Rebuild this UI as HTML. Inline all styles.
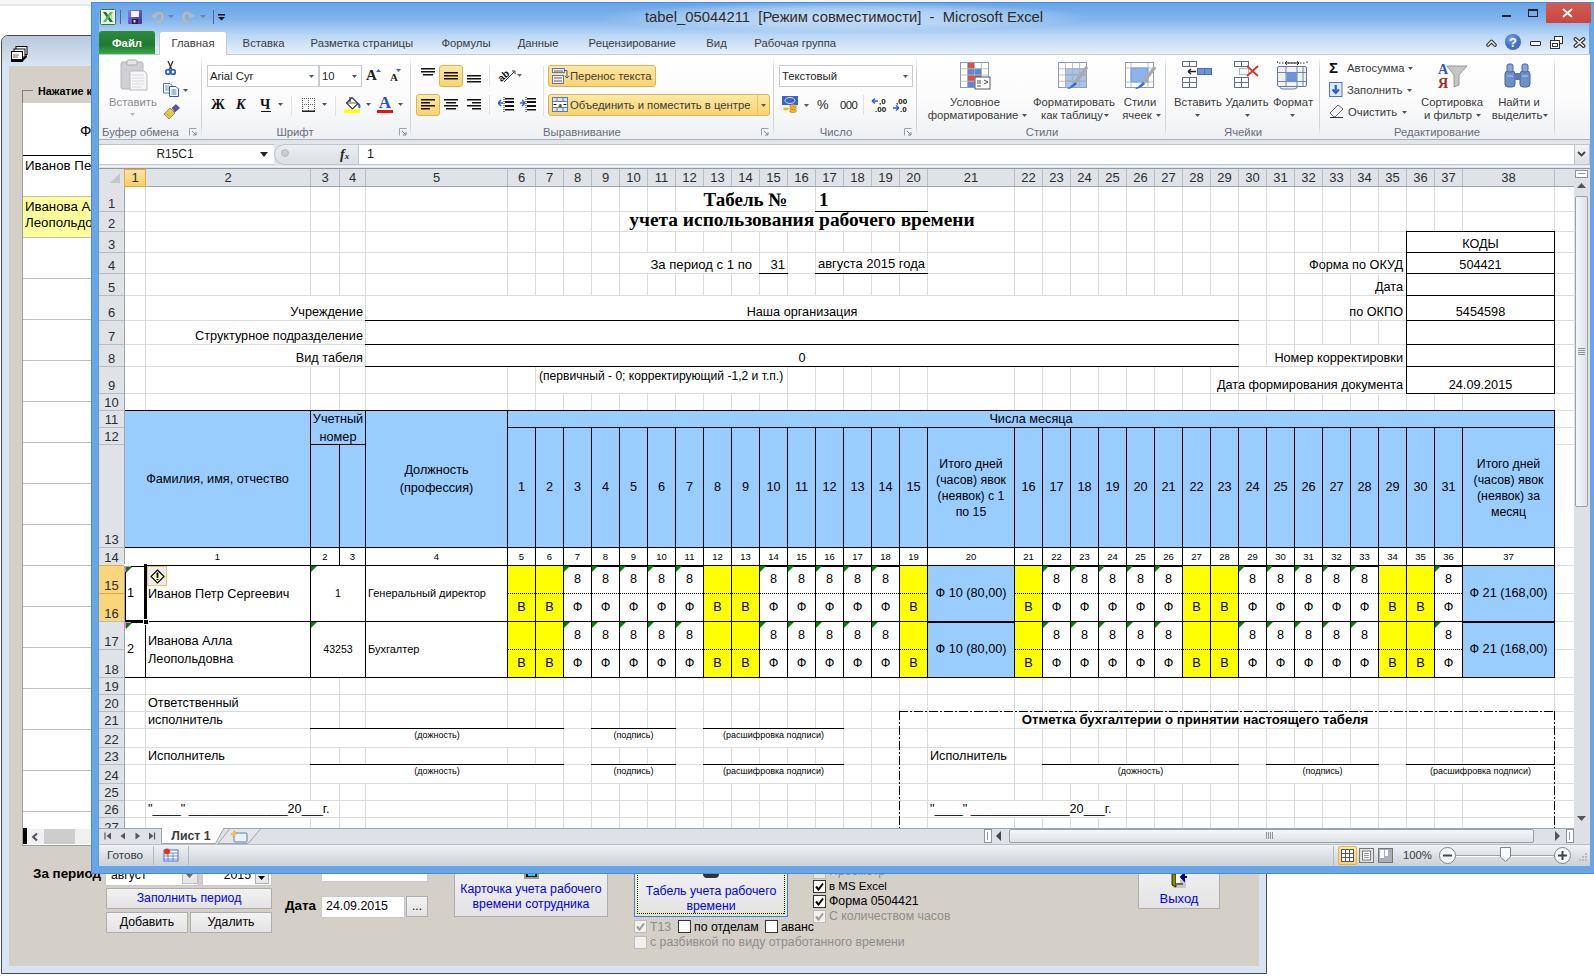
<!DOCTYPE html>
<html><head><meta charset="utf-8"><title>tabel_05044211 - Microsoft Excel</title>
<style>
html,body{margin:0;padding:0;}
body{width:1594px;height:977px;position:relative;overflow:hidden;font-family:"Liberation Sans", sans-serif;background:#fff;}
body>div,body>svg{position:absolute;}
.t{white-space:nowrap;overflow:visible;}
.c{display:flex;flex-direction:column;box-sizing:border-box;white-space:nowrap;color:#000;overflow:visible;}
</style></head><body>
<div style="left:0px;top:0px;width:1594px;height:977px;background:#fff"></div>
<div style="left:0px;top:0px;width:1594px;height:4px;background:#f4f5f7"></div>
<div style="left:0px;top:4px;width:1594px;height:2px;background:#e8e9eb"></div>
<div style="left:1px;top:35px;width:1266px;height:939px;background:#d6e4f3;border:1px solid #4a4a4a;border-radius:7px 7px 0 0;box-sizing:border-box"></div>
<div style="left:2px;top:36px;width:1264px;height:30px;background:linear-gradient(#b9c9db,#d8e5f3);border-radius:6px 6px 0 0"></div>
<div style="left:9px;top:66px;width:1250px;height:900px;background:#d4d0c8"></div>
<svg style="left:11px;top:46px;" width="17" height="16" viewBox="0 0 17 16"><rect x="5" y="0.5" width="11" height="8" fill="#fff" stroke="#000"/><rect x="3" y="3" width="11" height="8" fill="#fff" stroke="#000"/><rect x="0.5" y="5.5" width="11" height="8" fill="#fff" stroke="#000"/><rect x="0" y="13" width="12" height="3" fill="#000"/><path d="M12 12 L16 9 L16 11 L12 15Z" fill="#000"/><path d="M2 9h6M2 11h5" stroke="#666"/></svg>
<div style="left:22px;top:90px;width:11px;height:1px;background:#808080"></div>
<div style="left:22px;top:90px;width:1px;height:13px;background:#808080"></div>
<div class="t" style="left:38px;top:83px;width:60px;height:17px;line-height:17px;text-align:left;font-weight:bold;font-size:10.8px;color:#000">Нажатие к</div>
<div style="left:22px;top:103px;width:70px;height:743px;background:#fff;border-left:1px solid #a0a0a0;border-bottom:1px solid #a0a0a0;box-sizing:border-box"></div>
<div class="t" style="left:80px;top:121px;width:20px;height:20px;line-height:20px;text-align:left;font-size:15px;color:#000">Ф</div>
<div style="left:23px;top:155px;width:69px;height:1px;background:#000"></div>
<div class="t" style="left:25px;top:157px;width:80px;height:18px;line-height:18px;text-align:left;font-size:13.3px;color:#000">Иванов Петр</div>
<div style="left:23px;top:196px;width:69px;height:1px;background:#bdbdbd"></div>
<div style="left:23px;top:197px;width:69px;height:40px;background:#ffff99"></div>
<div class="t" style="left:25px;top:198px;width:80px;height:17px;line-height:17px;text-align:left;font-size:13.3px;color:#000">Иванова Алла</div>
<div class="t" style="left:25px;top:214px;width:80px;height:17px;line-height:17px;text-align:left;font-size:13.3px;color:#000">Леопольдовна</div>
<div style="left:23px;top:237px;width:69px;height:1px;background:#bdbdbd"></div>
<div style="left:23px;top:278px;width:69px;height:1px;background:#bdbdbd"></div>
<div style="left:23px;top:319px;width:69px;height:1px;background:#bdbdbd"></div>
<div style="left:23px;top:360px;width:69px;height:1px;background:#bdbdbd"></div>
<div style="left:23px;top:401px;width:69px;height:1px;background:#bdbdbd"></div>
<div style="left:23px;top:442px;width:69px;height:1px;background:#bdbdbd"></div>
<div style="left:23px;top:483px;width:69px;height:1px;background:#bdbdbd"></div>
<div style="left:23px;top:524px;width:69px;height:1px;background:#bdbdbd"></div>
<div style="left:23px;top:565px;width:69px;height:1px;background:#bdbdbd"></div>
<div style="left:23px;top:606px;width:69px;height:1px;background:#bdbdbd"></div>
<div style="left:23px;top:647px;width:69px;height:1px;background:#bdbdbd"></div>
<div style="left:23px;top:688px;width:69px;height:1px;background:#bdbdbd"></div>
<div style="left:23px;top:729px;width:69px;height:1px;background:#bdbdbd"></div>
<div style="left:23px;top:770px;width:69px;height:1px;background:#bdbdbd"></div>
<div style="left:23px;top:811px;width:69px;height:1px;background:#bdbdbd"></div>
<div style="left:27px;top:829px;width:65px;height:15px;background:#f0f0f0"></div>
<div style="left:23px;top:828px;width:4px;height:16px;background:#000"></div>
<svg style="left:30px;top:831px;" width="10" height="12" viewBox="0 0 10 12"><path d="M7 2.5 L3.2 6 L7 9.5" stroke="#555" stroke-width="2.2" fill="none"/></svg>
<div style="left:44px;top:829px;width:31px;height:15px;background:#cdcdcd"></div>
<div class="t" style="left:33px;top:864px;width:80px;height:19px;line-height:19px;text-align:left;font-weight:bold;font-size:13.4px;color:#000">За период</div>
<div style="left:105px;top:862px;width:94px;height:24px;background:#fff;border:1px solid #c9c9c9;box-sizing:border-box"></div>
<div class="t" style="left:111px;top:866px;width:60px;height:19px;line-height:19px;text-align:left;font-size:12.3px;color:#000">август</div>
<div style="left:182px;top:864px;width:16px;height:20px;background:#e8e8e8;border:1px solid #c0c0c0;box-sizing:border-box"></div>
<svg style="left:186px;top:874px;" width="8" height="5" viewBox="0 0 8 5"><path d="M0 0h7l-3.5 4z" fill="#666"/></svg>
<div style="left:202px;top:862px;width:70px;height:24px;background:#fff;border:1px solid #c9c9c9;box-sizing:border-box"></div>
<div class="t" style="left:206px;top:866px;width:45px;height:19px;line-height:19px;text-align:right;font-size:12.3px;color:#000">2015</div>
<div style="left:255px;top:869px;width:14px;height:15px;background:#e8e8e8;border:1px solid #b0b0b0;box-sizing:border-box"></div>
<svg style="left:258px;top:876px;" width="8" height="5" viewBox="0 0 8 5"><path d="M0 0h7l-3.5 4z" fill="#000"/></svg>
<div style="left:106px;top:888px;width:166px;height:21px;background:linear-gradient(#f2f2f2,#e3e3e3);border:1px solid #adadad;box-sizing:border-box"></div>
<div class="t" style="left:106px;top:888px;width:166px;height:20px;line-height:20px;text-align:center;font-size:12.3px;color:#0000ee">Заполнить период</div>
<div style="left:106px;top:912px;width:82px;height:21px;background:linear-gradient(#f2f2f2,#e3e3e3);border:1px solid #adadad;box-sizing:border-box"></div>
<div class="t" style="left:106px;top:912px;width:82px;height:20px;line-height:20px;text-align:center;font-size:12.3px;color:#000">Добавить</div>
<div style="left:190px;top:912px;width:82px;height:21px;background:linear-gradient(#f2f2f2,#e3e3e3);border:1px solid #adadad;box-sizing:border-box"></div>
<div class="t" style="left:190px;top:912px;width:82px;height:20px;line-height:20px;text-align:center;font-size:12.3px;color:#000">Удалить</div>
<div class="t" style="left:285px;top:896px;width:40px;height:20px;line-height:20px;text-align:left;font-weight:bold;font-size:13.4px;color:#000">Дата</div>
<div style="left:321px;top:862px;width:107px;height:20px;background:#fff;border:1px solid #c9c9c9;box-sizing:border-box"></div>
<div style="left:321px;top:896px;width:84px;height:22px;background:#fff;border:1px solid #c9c9c9;box-sizing:border-box"></div>
<div class="t" style="left:326px;top:896px;width:78px;height:21px;line-height:21px;text-align:left;font-size:12.4px;color:#000">24.09.2015</div>
<div style="left:406px;top:896px;width:22px;height:21px;background:linear-gradient(#f2f2f2,#e3e3e3);border:1px solid #adadad;box-sizing:border-box"></div>
<div class="t" style="left:406px;top:896px;width:22px;height:21px;line-height:21px;text-align:center;font-size:12px;color:#000">...</div>
<div style="left:454px;top:862px;width:154px;height:55px;background:linear-gradient(#f2f2f2,#e3e3e3);border:1px solid #adadad;box-sizing:border-box"></div>
<div style="left:524px;top:873px;width:15px;height:6px;background:#9a9a9a"></div>
<div style="left:526px;top:873px;width:11px;height:4px;background:#000"></div>
<div style="left:528px;top:874px;width:7px;height:2px;background:#00e0e0"></div>
<div class="t" style="left:454px;top:881px;width:154px;height:16px;line-height:16px;text-align:center;font-size:12.3px;color:#0000ee">Карточка учета рабочего</div>
<div class="t" style="left:454px;top:896px;width:154px;height:16px;line-height:16px;text-align:center;font-size:12.3px;color:#0000ee">времени сотрудника</div>
<div style="left:634px;top:862px;width:154px;height:55px;background:linear-gradient(#f2f2f2,#e3e3e3);border:1px solid #3c7fd6;box-sizing:border-box"></div>
<div style="left:637px;top:865px;width:148px;height:49px;border:1px dotted #000;box-sizing:border-box;outline:0;background:transparent"></div>
<div style="left:637px;top:913px;width:148px;height:1px;background:repeating-linear-gradient(90deg,#000 0 1px,#ff0 1px 2px)"></div>
<div style="left:637px;top:865px;width:1px;height:49px;background:repeating-linear-gradient(180deg,#000 0 1px,#ff0 1px 2px)"></div>
<div style="left:784px;top:865px;width:1px;height:49px;background:repeating-linear-gradient(180deg,#000 0 1px,#ff0 1px 2px)"></div>
<div style="left:703px;top:873px;width:16px;height:5px;background:#333;border-radius:0 0 4px 4px"></div>
<div class="t" style="left:634px;top:883px;width:154px;height:16px;line-height:16px;text-align:center;font-size:12.3px;color:#0000ee">Табель учета рабочего</div>
<div class="t" style="left:634px;top:898px;width:154px;height:16px;line-height:16px;text-align:center;font-size:12.3px;color:#0000ee">времени</div>
<div style="left:813px;top:873px;width:13px;height:6px;background:#e6e6e6;border:1px solid #bbb;border-top:0;box-sizing:border-box"></div>
<div class="t" style="left:829px;top:862px;width:120px;height:18px;line-height:18px;text-align:left;font-size:12.3px;color:#8d8d8d">Просмотр</div>
<div style="left:813px;top:880px;width:13px;height:13px;background:#fff;border:1px solid #333;box-sizing:border-box"></div>
<svg style="left:815px;top:882px;" width="9" height="9" viewBox="0 0 9 9"><path d="M1 4.5 L3.5 7.5 L8 1.5" stroke="#000" stroke-width="2" fill="none"/></svg>
<div class="t" style="left:829px;top:877px;width:120px;height:18px;line-height:18px;text-align:left;font-size:11.5px;color:#000">в MS Excel</div>
<div style="left:813px;top:895px;width:13px;height:13px;background:#fff;border:1px solid #333;box-sizing:border-box"></div>
<svg style="left:815px;top:897px;" width="9" height="9" viewBox="0 0 9 9"><path d="M1 4.5 L3.5 7.5 L8 1.5" stroke="#000" stroke-width="2" fill="none"/></svg>
<div class="t" style="left:829px;top:892px;width:120px;height:18px;line-height:18px;text-align:left;font-size:12.3px;color:#000">Форма 0504421</div>
<div style="left:813px;top:910px;width:13px;height:13px;background:#f1f0ee;border:1px solid #bcbcbc;box-sizing:border-box"></div>
<svg style="left:815px;top:912px;" width="9" height="9" viewBox="0 0 9 9"><path d="M1 4.5 L3.5 7.5 L8 1.5" stroke="#9a9a9a" stroke-width="2" fill="none"/></svg>
<div class="t" style="left:829px;top:907px;width:150px;height:18px;line-height:18px;text-align:left;font-size:12.3px;color:#8d8d8d">С количеством часов</div>
<div style="left:634px;top:920px;width:13px;height:13px;background:#f1f0ee;border:1px solid #bcbcbc;box-sizing:border-box"></div>
<svg style="left:636px;top:922px;" width="9" height="9" viewBox="0 0 9 9"><path d="M1 4.5 L3.5 7.5 L8 1.5" stroke="#9a9a9a" stroke-width="2" fill="none"/></svg>
<div class="t" style="left:650px;top:918px;width:40px;height:18px;line-height:18px;text-align:left;font-size:12.3px;color:#8d8d8d">Т13</div>
<div style="left:678px;top:920px;width:13px;height:13px;background:#fff;border:1px solid #333;box-sizing:border-box"></div>
<div class="t" style="left:694px;top:918px;width:80px;height:18px;line-height:18px;text-align:left;font-size:12.3px;color:#000">по отделам</div>
<div style="left:765px;top:920px;width:13px;height:13px;background:#fff;border:1px solid #333;box-sizing:border-box"></div>
<div class="t" style="left:781px;top:918px;width:50px;height:18px;line-height:18px;text-align:left;font-size:12.3px;color:#000">аванс</div>
<div style="left:634px;top:936px;width:13px;height:13px;background:#f1f0ee;border:1px solid #bcbcbc;box-sizing:border-box"></div>
<div class="t" style="left:650px;top:933px;width:270px;height:18px;line-height:18px;text-align:left;font-size:12.3px;color:#8d8d8d">с разбивкой по виду отработанного времени</div>
<div style="left:1138px;top:862px;width:82px;height:47px;background:linear-gradient(#f2f2f2,#e3e3e3);border:1px solid #adadad;box-sizing:border-box"></div>
<svg style="left:1171px;top:872px;" width="17" height="16" viewBox="0 0 17 16"><rect x="2" y="8" width="13" height="8" fill="#c8c8c8"/><path d="M1 1 L5 3 L5 15 L1 13Z" fill="#8c8c00" stroke="#000" stroke-width="0.8"/><rect x="5" y="1" width="4" height="10" fill="#fff"/><path d="M6 12h6" stroke="#000"/><path d="M16 5h-4M10 5l3-3v6z" stroke="#00008b" stroke-width="2" fill="#00008b"/></svg>
<div class="t" style="left:1138px;top:890px;width:82px;height:18px;line-height:18px;text-align:center;font-size:13px;color:#0000ee">Выход</div>
<div style="left:91px;top:2px;width:1503px;height:872px;background:#68a6e8"></div>
<div style="left:91px;top:2px;width:1px;height:872px;background:#4b8bd3"></div>
<div style="left:91px;top:873px;width:1503px;height:1px;background:#4b8bd3"></div>
<div style="left:98px;top:54px;width:1px;height:812px;background:#5b97d9"></div>
<div style="left:98px;top:865px;width:1492px;height:1px;background:#5b97d9"></div>
<div style="left:99px;top:3px;width:1490px;height:51px;background:linear-gradient(180deg,#68a4e8 0%,#7fb3ec 30%,#bcd8f5 65%,#e6f0fa 100%)"></div>
<div style="left:91px;top:2px;width:1503px;height:1px;background:#4b8bd3"></div>
<div style="left:600px;top:2px;width:490px;height:30px;background:radial-gradient(closest-side,rgba(225,238,251,0.75) 0%,rgba(225,238,251,0.45) 60%,rgba(225,238,251,0) 100%)"></div>
<div class="t" style="left:645px;top:7px;width:570px;height:20px;line-height:20px;text-align:left;font-size:14.8px;color:#2b2b2b;white-space:pre">tabel_05044211&nbsp; [Режим совместимости]&nbsp; -&nbsp; Microsoft Excel</div>
<div style="left:1546px;top:3px;width:45px;height:20px;background:linear-gradient(#d35a52,#c9463f)"></div>
<svg style="left:1562px;top:8px;" width="11" height="10" viewBox="0 0 11 10"><path d="M1 1L10 9M10 1L1 9" stroke="#fff" stroke-width="1.8"/></svg>
<div style="left:1502px;top:15px;width:9px;height:2px;background:#222"></div>
<div style="left:1528px;top:9px;width:10px;height:8px;border:1px solid #222;border-top-width:2px;box-sizing:border-box"></div>
<svg style="left:1486px;top:38px;" width="11" height="9" viewBox="0 0 11 9"><path d="M2 7 L5.5 3.5 L9 7" stroke="#333" stroke-width="3.6" fill="none" stroke-linejoin="round" stroke-linecap="round"/><path d="M2 7 L5.5 3.5 L9 7" stroke="#fff" stroke-width="1.4" fill="none" stroke-linecap="round"/></svg>
<svg style="left:1504px;top:33px;" width="18" height="18" viewBox="0 0 18 18"><circle cx="9" cy="9" r="8" fill="#4779cf"/><circle cx="9" cy="9" r="7.5" fill="url(#hg)"/><defs><radialGradient id="hg" cx="0.4" cy="0.3"><stop offset="0" stop-color="#7aa7ec"/><stop offset="1" stop-color="#3f6fc6"/></radialGradient></defs><text x="9" y="13.5" font-family="Liberation Sans" font-weight="bold" font-size="13" fill="#fff" text-anchor="middle">?</text></svg>
<div style="left:1530px;top:41px;width:11px;height:5px;background:#fff;border:1px solid #333;border-radius:1px;box-sizing:border-box"></div>
<svg style="left:1550px;top:36px;" width="14" height="13" viewBox="0 0 14 13"><rect x="4.5" y="0.5" width="8" height="7" fill="#fff" stroke="#333"/><rect x="0.5" y="4.5" width="9" height="8" fill="#fff" stroke="#333"/><rect x="2.5" y="7.5" width="5" height="3" fill="none" stroke="#333"/></svg>
<svg style="left:1573px;top:37px;" width="13" height="11" viewBox="0 0 13 11"><path d="M2.5 2L10.5 9M10.5 2L2.5 9" stroke="#333" stroke-width="3.8" stroke-linecap="round"/><path d="M2.5 2L10.5 9M10.5 2L2.5 9" stroke="#fff" stroke-width="1.6" stroke-linecap="round"/></svg>
<svg style="left:100px;top:9px;" width="16" height="16" viewBox="0 0 16 16"><rect x="0.5" y="0.5" width="15" height="15" rx="1" fill="#fff" stroke="#2e7d32"/><rect x="1.5" y="1.5" width="13" height="13" fill="#e8f3e8"/><path d="M3 3 H6 L13 13 H10Z" fill="#1e6b2a"/><path d="M13 3 H10 L3 13 H6Z" fill="#5cb85c"/><path d="M11.5 5v6" stroke="#8fd18f" stroke-width="0.8"/></svg>
<div style="left:120px;top:10px;width:1px;height:14px;background:#4d6a8a"></div>
<svg style="left:128px;top:10px;" width="14" height="14" viewBox="0 0 14 14"><defs><linearGradient id="sv" x1="0" y1="0" x2="1" y2="1"><stop offset="0" stop-color="#8a7fe0"/><stop offset="1" stop-color="#3b2f9a"/></linearGradient></defs><rect x="0" y="0" width="14" height="14" rx="1" fill="url(#sv)"/><rect x="3" y="1" width="8" height="6" fill="#f4f4ff"/><rect x="4" y="9" width="6" height="5" fill="#25224a"/><rect x="5.5" y="10" width="2" height="2.5" fill="#ddd"/></svg>
<svg style="left:150px;top:10px;" width="15" height="14" viewBox="0 0 15 14"><path d="M5 5.5 Q8 1.5 11 3.5 Q14 6 11.5 10 Q10 12 8 13" stroke="#b9b6b4" stroke-width="2.6" fill="none" stroke-linecap="round"/><path d="M0.5 6 L6.5 2.5 L6.5 9Z" fill="#b9b6b4"/></svg>
<svg style="left:168px;top:15px;" width="7" height="4" viewBox="0 0 7 4"><path d="M0 0h6l-3 3z" fill="#6a86a6"/></svg>
<svg style="left:181px;top:10px;" width="15" height="14" viewBox="0 0 15 14"><path d="M10 5.5 Q7 1.5 4 3.5 Q1 6 3.5 10 Q5 12 7 13" stroke="#b9b6b4" stroke-width="2.6" fill="none" stroke-linecap="round"/><path d="M14.5 6 L8.5 2.5 L8.5 9Z" fill="#b9b6b4"/></svg>
<svg style="left:200px;top:15px;" width="7" height="4" viewBox="0 0 7 4"><path d="M0 0h6l-3 3z" fill="#6a86a6"/></svg>
<div style="left:213px;top:10px;width:1px;height:14px;background:#4d6a8a"></div>
<svg style="left:218px;top:14px;" width="8" height="7" viewBox="0 0 8 7"><rect x="0" y="0" width="7" height="1.5" fill="#111"/><path d="M0 3h7l-3.5 3.5z" fill="#111"/></svg>
<div style="left:99px;top:31px;width:56px;height:23px;background:linear-gradient(#2e8a3e,#1f7a30 60%,#3aa64a);border-radius:3px 3px 0 0"></div>
<div class="t" style="left:99px;top:32px;width:56px;height:22px;line-height:22px;text-align:center;font-size:11.3px;color:#fff;font-weight:bold">Файл</div>
<div style="left:159px;top:31px;width:68px;height:24px;background:#fff;border:1px solid #c3c8cf;border-bottom:0;border-radius:3px 3px 0 0;box-sizing:border-box"></div>
<div class="t" style="left:159px;top:32px;width:68px;height:22px;line-height:22px;text-align:center;font-size:11.3px;color:#3b3b3b">Главная</div>
<div class="t" style="left:242.6px;top:32px;width:130px;height:22px;line-height:22px;text-align:left;font-size:11.3px;color:#3b3b3b">Вставка</div>
<div class="t" style="left:310.6px;top:32px;width:130px;height:22px;line-height:22px;text-align:left;font-size:11.3px;color:#3b3b3b">Разметка страницы</div>
<div class="t" style="left:441.4px;top:32px;width:130px;height:22px;line-height:22px;text-align:left;font-size:11.3px;color:#3b3b3b">Формулы</div>
<div class="t" style="left:517.7px;top:32px;width:130px;height:22px;line-height:22px;text-align:left;font-size:11.3px;color:#3b3b3b">Данные</div>
<div class="t" style="left:588.6px;top:32px;width:130px;height:22px;line-height:22px;text-align:left;font-size:11.3px;color:#3b3b3b">Рецензирование</div>
<div class="t" style="left:706.3px;top:32px;width:130px;height:22px;line-height:22px;text-align:left;font-size:11.3px;color:#3b3b3b">Вид</div>
<div class="t" style="left:754.3px;top:32px;width:130px;height:22px;line-height:22px;text-align:left;font-size:11.3px;color:#3b3b3b">Рабочая группа</div>
<div style="left:99px;top:54px;width:1491px;height:86px;background:linear-gradient(#ffffff 0%,#fbfbfc 55%,#eef0f3 100%);border-top:1px solid #c5cad1;border-bottom:1px solid #a9b0b8;box-sizing:border-box"></div>
<div style="left:160px;top:54px;width:66px;height:1px;background:#fff"></div>
<div style="left:201px;top:57px;width:1px;height:81px;background:linear-gradient(rgba(200,205,212,0),#cfd3d9 15%,#cfd3d9 85%,rgba(200,205,212,0))"></div>
<div style="left:410px;top:57px;width:1px;height:81px;background:linear-gradient(rgba(200,205,212,0),#cfd3d9 15%,#cfd3d9 85%,rgba(200,205,212,0))"></div>
<div style="left:773px;top:57px;width:1px;height:81px;background:linear-gradient(rgba(200,205,212,0),#cfd3d9 15%,#cfd3d9 85%,rgba(200,205,212,0))"></div>
<div style="left:916px;top:57px;width:1px;height:81px;background:linear-gradient(rgba(200,205,212,0),#cfd3d9 15%,#cfd3d9 85%,rgba(200,205,212,0))"></div>
<div style="left:1165px;top:57px;width:1px;height:81px;background:linear-gradient(rgba(200,205,212,0),#cfd3d9 15%,#cfd3d9 85%,rgba(200,205,212,0))"></div>
<div style="left:1319px;top:57px;width:1px;height:81px;background:linear-gradient(rgba(200,205,212,0),#cfd3d9 15%,#cfd3d9 85%,rgba(200,205,212,0))"></div>
<div style="left:1554px;top:57px;width:1px;height:81px;background:linear-gradient(rgba(200,205,212,0),#cfd3d9 15%,#cfd3d9 85%,rgba(200,205,212,0))"></div>
<svg style="left:120px;top:59px;" width="28" height="32" viewBox="0 0 28 32"><rect x="1" y="3" width="22" height="27" rx="2" fill="#cfcfd4" stroke="#b5b5bb"/><rect x="7" y="1" width="10" height="5" rx="1.5" fill="#e8e8ea" stroke="#a9a9ae"/><path d="M10 12 H24 L27 15 V31 H10Z" fill="#f6f6f7" stroke="#b9b9be"/><path d="M12 16h12M12 19h12M12 22h12M12 25h12M12 28h10" stroke="#dadadd"/></svg>
<div class="t" style="left:105px;top:95px;width:56px;height:15px;line-height:15px;text-align:center;font-size:11.3px;color:#8c8c95">Вставить</div>
<svg style="left:130px;top:113px;" width="6" height="3" viewBox="0 0 6 3"><path d="M0 0h5l-2.5 3z" fill="#b5b5bb"/></svg>
<div class="t" style="left:102px;top:125px;width:90px;height:15px;line-height:15px;text-align:left;font-size:11.3px;color:#6b6b7b">Буфер обмена</div>
<svg style="left:189px;top:128px;" width="8" height="8" viewBox="0 0 8 8"><path d="M0.5 7.5V0.5H7.5" stroke="#9aa3ad" fill="none"/><path d="M3 3L7 7M7 4V7H4" stroke="#7f8a96" fill="none"/></svg>
<svg style="left:165px;top:61px;" width="11" height="14" viewBox="0 0 11 14"><path d="M3 0 L6.5 8 M8 0 L4.5 8" stroke="#333" stroke-width="1.3"/><circle cx="3" cy="11" r="2.3" fill="none" stroke="#2a5bd7" stroke-width="1.8"/><circle cx="8" cy="11" r="2.3" fill="none" stroke="#2a5bd7" stroke-width="1.8"/></svg>
<svg style="left:163px;top:83px;" width="16" height="14" viewBox="0 0 16 14"><path d="M0.5 0.5H7L9 2.5V10H0.5Z" fill="#fff" stroke="#4a74c9"/><path d="M2 3h4M2 5h4M2 7h4" stroke="#6b8fd6"/><path d="M6.5 3.5H13L15.5 6V13.5H6.5Z" fill="#fff" stroke="#2d59b5"/><path d="M8.5 7h5M8.5 9h5M8.5 11h5" stroke="#4a74c9"/></svg>
<svg style="left:183px;top:89px;" width="6" height="3" viewBox="0 0 6 3"><path d="M0 0h5l-2.5 3z" fill="#555"/></svg>
<svg style="left:163px;top:104px;" width="17" height="15" viewBox="0 0 17 15"><path d="M1 10 L7 4 L12 9 L6 15Z" fill="#e8c84a" stroke="#8a7a2a" stroke-width="0.8"/><path d="M2 11l3 3M3.5 9.5l3 3" stroke="#b89b2a"/><path d="M9 4 L13 0.5 L16.5 4 L12 8Z" fill="#5a4fb0" stroke="#3a3080" stroke-width="0.6"/></svg>
<div style="left:207px;top:65px;width:112px;height:22px;background:#fff;border:1px solid #c7ccd3;box-sizing:border-box"></div>
<div class="t" style="left:210px;top:66px;width:90px;height:20px;line-height:20px;text-align:left;font-size:11.3px;color:#1e1e1e">Arial Cyr</div>
<svg style="left:309px;top:75px;" width="6" height="3" viewBox="0 0 6 3"><path d="M0 0h5l-2.5 3z" fill="#555"/></svg>
<div style="left:319px;top:65px;width:43px;height:22px;background:#fff;border:1px solid #c7ccd3;box-sizing:border-box"></div>
<div class="t" style="left:322px;top:66px;width:30px;height:20px;line-height:20px;text-align:left;font-size:11.3px;color:#1e1e1e">10</div>
<svg style="left:352px;top:75px;" width="6" height="3" viewBox="0 0 6 3"><path d="M0 0h5l-2.5 3z" fill="#555"/></svg>
<div class="t" style="left:366px;top:66px;width:16px;height:18px;line-height:18px;text-align:left;font-family:Liberation Serif;font-weight:bold;font-size:15px;color:#222">A</div>
<svg style="left:376px;top:69px;" width="6" height="4" viewBox="0 0 6 4"><path d="M0 3h5l-2.5-3z" fill="#3563c9"/></svg>
<div class="t" style="left:390px;top:69px;width:12px;height:16px;line-height:16px;text-align:left;font-family:Liberation Serif;font-weight:bold;font-size:11px;color:#222">A</div>
<svg style="left:396px;top:69px;" width="6" height="4" viewBox="0 0 6 4"><path d="M0 0h5l-2.5 3z" fill="#3563c9"/></svg>
<div class="t" style="left:211px;top:96px;width:16px;height:18px;line-height:18px;text-align:left;font-family:Liberation Serif;font-weight:bold;font-size:14px;color:#111">Ж</div>
<div class="t" style="left:236px;top:96px;width:14px;height:18px;line-height:18px;text-align:left;font-family:Liberation Serif;font-weight:bold;font-style:italic;font-size:14px;color:#111">К</div>
<div class="t" style="left:260px;top:96px;width:14px;height:18px;line-height:18px;text-align:left;font-family:Liberation Serif;font-weight:bold;font-size:14px;color:#111">Ч</div>
<div style="left:261px;top:111px;width:10px;height:1px;background:#111"></div>
<svg style="left:278px;top:103px;" width="6" height="3" viewBox="0 0 6 3"><path d="M0 0h5l-2.5 3z" fill="#555"/></svg>
<div style="left:291px;top:96px;width:1px;height:20px;background:#dfe2e6"></div>
<svg style="left:302px;top:98px;" width="14" height="15" viewBox="0 0 14 15"><g stroke="#666" stroke-width="1" stroke-dasharray="1 1"><path d="M0.5 0V13M6.5 0V13M12.5 0V13M0 0.5H13M0 6.5H13"/></g><rect x="0" y="12.5" width="13" height="1.5" fill="#222"/></svg>
<svg style="left:322px;top:103px;" width="6" height="3" viewBox="0 0 6 3"><path d="M0 0h5l-2.5 3z" fill="#555"/></svg>
<div style="left:335px;top:96px;width:1px;height:20px;background:#dfe2e6"></div>
<svg style="left:344px;top:96px;" width="17" height="17" viewBox="0 0 17 17"><path d="M2.5 7 L8 1.5 L14 7.5 L8.5 13Z" fill="#fff" stroke="#333" stroke-width="1.1"/><path d="M2.5 7 H14" stroke="#333" stroke-width="0.8"/><path d="M6 1 V6" stroke="#333" stroke-width="1.2"/><path d="M14 7.5 Q16.5 10 15 12" stroke="#2d5fc4" stroke-width="2" fill="none"/><rect x="0" y="13.5" width="16" height="3.5" fill="#ffff00"/></svg>
<svg style="left:366px;top:103px;" width="6" height="3" viewBox="0 0 6 3"><path d="M0 0h5l-2.5 3z" fill="#555"/></svg>
<div class="t" style="left:377px;top:94px;width:16px;height:18px;line-height:18px;text-align:center;font-family:Liberation Serif;font-weight:bold;font-size:17px;color:#2c4fb8">A</div>
<div style="left:377px;top:110px;width:16px;height:3px;background:#ee1111"></div>
<svg style="left:398px;top:103px;" width="6" height="3" viewBox="0 0 6 3"><path d="M0 0h5l-2.5 3z" fill="#555"/></svg>
<div class="t" style="left:250px;top:125px;width:90px;height:15px;line-height:15px;text-align:center;font-size:11.3px;color:#6b6b7b">Шрифт</div>
<svg style="left:399px;top:128px;" width="8" height="8" viewBox="0 0 8 8"><path d="M0.5 7.5V0.5H7.5" stroke="#9aa3ad" fill="none"/><path d="M3 3L7 7M7 4V7H4" stroke="#7f8a96" fill="none"/></svg>
<svg style="left:421px;top:68px;" width="15" height="8" viewBox="0 0 15 8"><rect x="0" y="0" width="14" height="1.5" fill="#111"/><rect x="0" y="3" width="14" height="1.5" fill="#111"/><rect x="2" y="6" width="10" height="1.5" fill="#111"/></svg>
<div style="left:439px;top:65px;width:24px;height:22px;background:linear-gradient(#fde8a8,#f9d46e);border:1px solid #e0b34e;border-radius:3px;box-sizing:border-box"></div>
<svg style="left:444px;top:72px;" width="15" height="8" viewBox="0 0 15 8"><rect x="0" y="0" width="14" height="1.5" fill="#111"/><rect x="0" y="3" width="14" height="1.5" fill="#111"/><rect x="0" y="6" width="14" height="1.5" fill="#111"/></svg>
<svg style="left:467px;top:75px;" width="15" height="8" viewBox="0 0 15 8"><rect x="0" y="0" width="14" height="1.5" fill="#111"/><rect x="0" y="3" width="14" height="1.5" fill="#111"/><rect x="0" y="6" width="14" height="1.5" fill="#111"/></svg>
<div style="left:489px;top:66px;width:1px;height:20px;background:#dfe2e6"></div>
<svg style="left:498px;top:68px;" width="24" height="15" viewBox="0 0 24 15"><text x="0" y="11" transform="rotate(-40 6 8)" font-family="Liberation Sans" font-weight="bold" font-size="10" fill="#111">ab</text><path d="M6 14 L16 4" stroke="#333"/><path d="M14 3h3v3" stroke="#333" fill="none"/><path d="M19 6h5l-2.5 3z" fill="#666"/></svg>
<div style="left:416px;top:94px;width:24px;height:22px;background:linear-gradient(#fde8a8,#f9d46e);border:1px solid #e0b34e;border-radius:3px;box-sizing:border-box"></div>
<svg style="left:421px;top:99px;" width="15" height="12" viewBox="0 0 15 12"><rect x="0" y="0" width="14" height="1.5" fill="#111"/><rect x="0" y="3" width="9" height="1.5" fill="#111"/><rect x="0" y="6" width="14" height="1.5" fill="#111"/><rect x="0" y="9" width="9" height="1.5" fill="#111"/></svg>
<svg style="left:444px;top:99px;" width="15" height="12" viewBox="0 0 15 12"><rect x="0" y="0" width="14" height="1.5" fill="#111"/><rect x="2" y="3" width="10" height="1.5" fill="#111"/><rect x="0" y="6" width="14" height="1.5" fill="#111"/><rect x="2" y="9" width="10" height="1.5" fill="#111"/></svg>
<svg style="left:467px;top:99px;" width="15" height="12" viewBox="0 0 15 12"><rect x="0" y="0" width="14" height="1.5" fill="#111"/><rect x="5" y="3" width="9" height="1.5" fill="#111"/><rect x="0" y="6" width="14" height="1.5" fill="#111"/><rect x="5" y="9" width="9" height="1.5" fill="#111"/></svg>
<div style="left:489px;top:95px;width:1px;height:20px;background:#dfe2e6"></div>
<svg style="left:498px;top:97px;" width="17" height="15" viewBox="0 0 17 15"><rect x="7" y="1" width="9" height="1.5" fill="#111"/><rect x="7" y="4" width="9" height="2" fill="#111"/><rect x="7" y="8" width="9" height="2" fill="#111"/><rect x="7" y="12" width="9" height="1.5" fill="#111"/><path d="M6 0V15" stroke="#111" stroke-dasharray="1 1"/><path d="M0 6h5M0 6l3-3M0 6l3 3" stroke="#2d5fc4" stroke-width="1.5"/></svg>
<svg style="left:520px;top:97px;" width="17" height="15" viewBox="0 0 17 15"><rect x="7" y="1" width="9" height="1.5" fill="#111"/><rect x="7" y="4" width="9" height="2" fill="#111"/><rect x="7" y="8" width="9" height="2" fill="#111"/><rect x="7" y="12" width="9" height="1.5" fill="#111"/><path d="M6 0V15" stroke="#111" stroke-dasharray="1 1"/><path d="M0 6h5M5 6l-3-3M5 6l-3 3" stroke="#2d5fc4" stroke-width="1.5"/></svg>
<div style="left:543px;top:66px;width:1px;height:50px;background:#dfe2e6"></div>
<div style="left:548px;top:65px;width:108px;height:22px;background:linear-gradient(#fde8a8,#f9d46e);border:1px solid #e0b34e;border-radius:3px;box-sizing:border-box"></div>
<svg style="left:552px;top:68px;" width="17" height="16" viewBox="0 0 17 16"><rect x="0.5" y="0.5" width="12" height="4" fill="#e9eef7" stroke="#5b7bb0"/><rect x="0.5" y="7.5" width="11" height="8" fill="#e9eef7" stroke="#5b7bb0"/><path d="M2 3h9M2 10h8M2 13h8" stroke="#a0522d"/><path d="M12 2.5h3V10M15 10l-2-2M15 10l2-2" stroke="#3a5a9a" fill="none"/></svg>
<div class="t" style="left:570px;top:66px;width:90px;height:20px;line-height:20px;text-align:left;font-size:11.3px;color:#3b3b3b">Перенос текста</div>
<div style="left:548px;top:94px;width:222px;height:22px;background:linear-gradient(#fde8a8,#f9d46e);border:1px solid #e0b34e;border-radius:3px;box-sizing:border-box"></div>
<div style="left:757px;top:95px;width:1px;height:20px;background:#e6c46a"></div>
<svg style="left:552px;top:97px;" width="16" height="15" viewBox="0 0 16 15"><rect x="0.5" y="0.5" width="15" height="14" fill="#dbe6f6" stroke="#5b7bb0"/><path d="M0.5 4.5h15M0.5 10.5h15M5 0.5v4M11 0.5v4M5 10.5v4M11 10.5v4" stroke="#5b7bb0"/><rect x="1" y="5" width="14" height="5" fill="#fff"/><text x="8" y="9.5" font-family="Liberation Serif" font-weight="bold" font-size="7" text-anchor="middle" fill="#111">a</text><path d="M1.5 7.5h3M14.5 7.5h-3" stroke="#111"/></svg>
<div class="t" style="left:570px;top:95px;width:190px;height:20px;line-height:20px;text-align:left;font-size:11.3px;color:#3b3b3b">Объединить и поместить в центре</div>
<svg style="left:761px;top:104px;" width="6" height="3" viewBox="0 0 6 3"><path d="M0 0h5l-2.5 3z" fill="#555"/></svg>
<div class="t" style="left:543px;top:125px;width:90px;height:15px;line-height:15px;text-align:left;font-size:11.3px;color:#6b6b7b">Выравнивание</div>
<svg style="left:761px;top:128px;" width="8" height="8" viewBox="0 0 8 8"><path d="M0.5 7.5V0.5H7.5" stroke="#9aa3ad" fill="none"/><path d="M3 3L7 7M7 4V7H4" stroke="#7f8a96" fill="none"/></svg>
<div style="left:779px;top:65px;width:134px;height:22px;background:#fff;border:1px solid #c7ccd3;box-sizing:border-box"></div>
<div class="t" style="left:782px;top:66px;width:100px;height:20px;line-height:20px;text-align:left;font-size:11.3px;color:#1e1e1e">Текстовый</div>
<svg style="left:903px;top:75px;" width="6" height="3" viewBox="0 0 6 3"><path d="M0 0h5l-2.5 3z" fill="#555"/></svg>
<svg style="left:782px;top:96px;" width="17" height="17" viewBox="0 0 17 17"><rect x="0" y="0" width="16" height="9" fill="#3b64c4"/><ellipse cx="8" cy="4.5" rx="5" ry="3" fill="none" stroke="#cfe0ff"/><ellipse cx="11" cy="10" rx="3.5" ry="1.6" fill="#f0b52a" stroke="#b07a10" stroke-width="0.5"/><ellipse cx="11" cy="12.5" rx="3.5" ry="1.6" fill="#f0b52a" stroke="#b07a10" stroke-width="0.5"/><ellipse cx="11" cy="15" rx="3.5" ry="1.6" fill="#f0b52a" stroke="#b07a10" stroke-width="0.5"/><ellipse cx="4" cy="13" rx="3" ry="1.4" fill="#f0b52a"/></svg>
<svg style="left:804px;top:104px;" width="6" height="3" viewBox="0 0 6 3"><path d="M0 0h5l-2.5 3z" fill="#555"/></svg>
<div class="t" style="left:817px;top:96px;width:14px;height:18px;line-height:18px;text-align:left;font-size:13px;color:#222">%</div>
<div class="t" style="left:840px;top:96px;width:18px;height:18px;line-height:18px;text-align:left;font-size:11.3px;color:#222;letter-spacing:-0.5px">000</div>
<div style="left:863px;top:95px;width:1px;height:20px;background:#dfe2e6"></div>
<svg style="left:871px;top:97px;" width="17" height="15" viewBox="0 0 17 15"><path d="M1 4h6M1 4l3-2.5M1 4l3 2.5" stroke="#2d5fc4" stroke-width="1.4"/><text x="8" y="7" font-family="Liberation Sans" font-weight="bold" font-size="8" fill="#111">,0</text><text x="4" y="14.5" font-family="Liberation Sans" font-weight="bold" font-size="8" fill="#111">,00</text></svg>
<svg style="left:892px;top:97px;" width="17" height="15" viewBox="0 0 17 15"><text x="4" y="7" font-family="Liberation Sans" font-weight="bold" font-size="8" fill="#111">,00</text><path d="M1 11h6M7 11l-3-2.5M7 11l-3 2.5" stroke="#2d5fc4" stroke-width="1.4"/><text x="8" y="14.5" font-family="Liberation Sans" font-weight="bold" font-size="8" fill="#111">,0</text></svg>
<div class="t" style="left:791px;top:125px;width:90px;height:15px;line-height:15px;text-align:center;font-size:11.3px;color:#6b6b7b">Число</div>
<svg style="left:904px;top:128px;" width="8" height="8" viewBox="0 0 8 8"><path d="M0.5 7.5V0.5H7.5" stroke="#9aa3ad" fill="none"/><path d="M3 3L7 7M7 4V7H4" stroke="#7f8a96" fill="none"/></svg>
<svg style="left:960px;top:62px;" width="31" height="28" viewBox="0 0 31 28"><rect x="0.5" y="0.5" width="28" height="25" fill="#fff" stroke="#8d9bb0"/><rect x="7.5" y="0.5" width="7" height="6.25" fill="#e84a3c" stroke="#8d9bb0" stroke-width="0.8"/><rect x="7.5" y="6.75" width="7" height="6.25" fill="#5b87d6" stroke="#8d9bb0" stroke-width="0.8"/><rect x="14.5" y="6.75" width="7" height="6.25" fill="#5b87d6" stroke="#8d9bb0" stroke-width="0.8"/><rect x="7.5" y="13.0" width="7" height="6.25" fill="#e84a3c" stroke="#8d9bb0" stroke-width="0.8"/><rect x="14.5" y="13.0" width="7" height="6.25" fill="#e84a3c" stroke="#8d9bb0" stroke-width="0.8"/><rect x="7.5" y="19.25" width="7" height="6.25" fill="#5b87d6" stroke="#8d9bb0" stroke-width="0.8"/><path d="M7.5 0.5v25M14.5 0.5v25M21.5 0.5v25M0.5 6.75h28M0.5 13h28M0.5 19.25h28" stroke="#a8b4c6" stroke-width="0.8"/><rect x="15" y="15" width="15" height="12" fill="#fff" stroke="#555"/><path d="M17 19h4M17 21h4M24 18l4 2-4 2M17 24h4" stroke="#333" stroke-width="0.9" fill="none"/></svg>
<div class="t" style="left:925px;top:95px;width:100px;height:15px;line-height:15px;text-align:center;font-size:11.3px;color:#3b3b3b">Условное</div>
<div class="t" style="left:923px;top:108px;width:100px;height:15px;line-height:15px;text-align:center;font-size:11.3px;color:#3b3b3b">форматирование</div>
<svg style="left:1022px;top:114px;" width="6" height="3" viewBox="0 0 6 3"><path d="M0 0h5l-2.5 3z" fill="#555"/></svg>
<svg style="left:1058px;top:62px;" width="31" height="28" viewBox="0 0 31 28"><rect x="0.5" y="0.5" width="28" height="25" fill="#fff" stroke="#8d9bb0"/><rect x="7.5" y="6.75" width="7" height="6.25" fill="#a9c3ee" stroke="#8d9bb0" stroke-width="0.8"/><rect x="14.5" y="6.75" width="7" height="6.25" fill="#a9c3ee" stroke="#8d9bb0" stroke-width="0.8"/><rect x="21.5" y="6.75" width="7" height="6.25" fill="#a9c3ee" stroke="#8d9bb0" stroke-width="0.8"/><rect x="7.5" y="13.0" width="7" height="6.25" fill="#a9c3ee" stroke="#8d9bb0" stroke-width="0.8"/><rect x="14.5" y="13.0" width="7" height="6.25" fill="#a9c3ee" stroke="#8d9bb0" stroke-width="0.8"/><rect x="21.5" y="13.0" width="7" height="6.25" fill="#a9c3ee" stroke="#8d9bb0" stroke-width="0.8"/><rect x="7.5" y="19.25" width="7" height="6.25" fill="#a9c3ee" stroke="#8d9bb0" stroke-width="0.8"/><rect x="14.5" y="19.25" width="7" height="6.25" fill="#a9c3ee" stroke="#8d9bb0" stroke-width="0.8"/><rect x="21.5" y="19.25" width="7" height="6.25" fill="#a9c3ee" stroke="#8d9bb0" stroke-width="0.8"/><path d="M7.5 0.5v25M14.5 0.5v25M21.5 0.5v25M0.5 6.75h28M0.5 13h28M0.5 19.25h28" stroke="#a8b4c6" stroke-width="0.8"/><path d="M29 5 L17 21" stroke="#aaa" stroke-width="3.5"/><path d="M17 20 Q12 25 9 27 Q14 27 19 22Z" fill="#3a6fd0"/></svg>
<div class="t" style="left:1024px;top:95px;width:100px;height:15px;line-height:15px;text-align:center;font-size:11.3px;color:#3b3b3b">Форматировать</div>
<div class="t" style="left:1022px;top:108px;width:100px;height:15px;line-height:15px;text-align:center;font-size:11.3px;color:#3b3b3b">как таблицу</div>
<svg style="left:1104px;top:114px;" width="6" height="3" viewBox="0 0 6 3"><path d="M0 0h5l-2.5 3z" fill="#555"/></svg>
<svg style="left:1125px;top:62px;" width="31" height="28" viewBox="0 0 31 28"><rect x="0.5" y="0.5" width="28" height="25" fill="#fff" stroke="#8d9bb0"/><rect x="6" y="6" width="17" height="14" fill="#8fb1ec" stroke="#5b87d6"/><path d="M0.5 6h28M0.5 20h28M6 0.5v25M23 0.5v25" stroke="#a8b4c6" stroke-width="0.8"/><path d="M30 5 L18 21" stroke="#aaa" stroke-width="3.5"/><path d="M18 20 Q13 25 10 27 Q15 27 20 22Z" fill="#3a6fd0"/></svg>
<div class="t" style="left:1115px;top:95px;width:50px;height:15px;line-height:15px;text-align:center;font-size:11.3px;color:#3b3b3b">Стили</div>
<div class="t" style="left:1112px;top:108px;width:50px;height:15px;line-height:15px;text-align:center;font-size:11.3px;color:#3b3b3b">ячеек</div>
<svg style="left:1156px;top:114px;" width="6" height="3" viewBox="0 0 6 3"><path d="M0 0h5l-2.5 3z" fill="#555"/></svg>
<div class="t" style="left:992px;top:125px;width:100px;height:15px;line-height:15px;text-align:center;font-size:11.3px;color:#6b6b7b">Стили</div>
<svg style="left:1182px;top:61px;" width="31" height="28" viewBox="0 0 31 28"><rect x="0.5" y="0.5" width="14" height="5" fill="#fff" stroke="#5e6f86"/><path d="M7.5 0.5v5" stroke="#5e6f86"/><rect x="0.5" y="16.5" width="14" height="10" fill="#fff" stroke="#5e6f86"/><path d="M7.5 16.5v10M0.5 21.5h14" stroke="#5e6f86"/><rect x="15.5" y="7.5" width="14" height="6" fill="#6b93dc" stroke="#4a6fb8"/><path d="M22.5 7.5v6" stroke="#4a6fb8"/><path d="M6 10.5h8M6 10.5l3-2.5M6 10.5l3 2.5" stroke="#222" stroke-width="1.5" fill="none"/></svg>
<div class="t" style="left:1168px;top:95px;width:60px;height:15px;line-height:15px;text-align:center;font-size:11.3px;color:#3b3b3b">Вставить</div>
<svg style="left:1195px;top:114px;" width="6" height="3" viewBox="0 0 6 3"><path d="M0 0h5l-2.5 3z" fill="#555"/></svg>
<svg style="left:1234px;top:61px;" width="26" height="28" viewBox="0 0 26 28"><rect x="0.5" y="0.5" width="14" height="5" fill="#fff" stroke="#5e6f86"/><path d="M7.5 0.5v5" stroke="#5e6f86"/><rect x="0.5" y="16.5" width="14" height="10" fill="#fff" stroke="#5e6f86"/><path d="M7.5 16.5v10M0.5 21.5h14" stroke="#5e6f86"/><rect x="5.5" y="7.5" width="9" height="6" fill="none" stroke="#4a6fb8" stroke-dasharray="1 1"/><path d="M13 5 L24 15 M24 5 L13 15" stroke="#e03020" stroke-width="1.8"/></svg>
<div class="t" style="left:1217px;top:95px;width:60px;height:15px;line-height:15px;text-align:center;font-size:11.3px;color:#3b3b3b">Удалить</div>
<svg style="left:1245px;top:114px;" width="6" height="3" viewBox="0 0 6 3"><path d="M0 0h5l-2.5 3z" fill="#555"/></svg>
<svg style="left:1277px;top:60px;" width="31" height="30" viewBox="0 0 31 30"><path d="M0.5 1.5v3M30 1.5v3M2 3h26" stroke="#333" stroke-dasharray="1.5 1.5"/><path d="M8 3h14M8 3l2-2M8 3l2 2M22 3l-2-2M22 3l-2 2" stroke="#333"/><rect x="0.5" y="6.5" width="29" height="20" rx="1.5" fill="#eef1f8" stroke="#6a7a90"/><path d="M9 6.5v20M20 6.5v20M26 6.5v20M0.5 12.5h29M0.5 21.5h29" stroke="#6a7a90" stroke-width="0.9"/><rect x="9.5" y="12.5" width="10.5" height="9" fill="#6b93dc"/><path d="M3 27 Q3 29 6 29 H17 Q20 29 20 27" stroke="#6a7a90" fill="#eef1f8"/></svg>
<div class="t" style="left:1263px;top:95px;width:60px;height:15px;line-height:15px;text-align:center;font-size:11.3px;color:#3b3b3b">Формат</div>
<svg style="left:1290px;top:114px;" width="6" height="3" viewBox="0 0 6 3"><path d="M0 0h5l-2.5 3z" fill="#555"/></svg>
<div class="t" style="left:1193px;top:125px;width:100px;height:15px;line-height:15px;text-align:center;font-size:11.3px;color:#6b6b7b">Ячейки</div>
<div class="t" style="left:1329px;top:60px;width:14px;height:16px;line-height:16px;text-align:left;font-size:15px;font-weight:bold;color:#111">Σ</div>
<div class="t" style="left:1347px;top:61px;width:80px;height:15px;line-height:15px;text-align:left;font-size:11.3px;color:#3b3b3b">Автосумма</div>
<svg style="left:1408px;top:67px;" width="6" height="3" viewBox="0 0 6 3"><path d="M0 0h5l-2.5 3z" fill="#555"/></svg>
<svg style="left:1329px;top:82px;" width="14" height="15" viewBox="0 0 14 15"><rect x="0.5" y="0.5" width="12.5" height="14" fill="#dfe9f9" stroke="#4a74c9"/><path d="M6.75 3v7M3.5 7.5l3.25 3.5 3.25-3.5" stroke="#2d5fc4" stroke-width="2.2" fill="none"/></svg>
<div class="t" style="left:1347px;top:83px;width:80px;height:15px;line-height:15px;text-align:left;font-size:11.3px;color:#3b3b3b">Заполнить</div>
<svg style="left:1407px;top:89px;" width="6" height="3" viewBox="0 0 6 3"><path d="M0 0h5l-2.5 3z" fill="#555"/></svg>
<svg style="left:1329px;top:104px;" width="15" height="14" viewBox="0 0 15 14"><path d="M5 13 L1 9 L9 1 L14 5 L6 13Z" fill="#f2f4f8" stroke="#555" stroke-width="0.9"/><path d="M1 13.5h13" stroke="#333"/></svg>
<div class="t" style="left:1348px;top:105px;width:80px;height:15px;line-height:15px;text-align:left;font-size:11.3px;color:#3b3b3b">Очистить</div>
<svg style="left:1402px;top:111px;" width="6" height="3" viewBox="0 0 6 3"><path d="M0 0h5l-2.5 3z" fill="#555"/></svg>
<svg style="left:1437px;top:61px;" width="31" height="28" viewBox="0 0 31 28"><text x="1" y="13" font-family="Liberation Serif" font-weight="bold" font-size="14" fill="#3358b8">A</text><text x="1" y="27" font-family="Liberation Serif" font-weight="bold" font-size="14" fill="#a02a2a">Я</text><path d="M10 5 H30 L22 14 V24 L17 26 V14Z" fill="#c6c6c6" stroke="#888" stroke-width="0.8"/></svg>
<div class="t" style="left:1402px;top:95px;width:100px;height:15px;line-height:15px;text-align:center;font-size:11.3px;color:#3b3b3b">Сортировка</div>
<div class="t" style="left:1398px;top:108px;width:100px;height:15px;line-height:15px;text-align:center;font-size:11.3px;color:#3b3b3b">и фильтр</div>
<svg style="left:1476px;top:114px;" width="6" height="3" viewBox="0 0 6 3"><path d="M0 0h5l-2.5 3z" fill="#555"/></svg>
<svg style="left:1504px;top:62px;" width="28" height="26" viewBox="0 0 28 26"><rect x="1" y="9" width="10" height="16" rx="3" fill="#6f8fc8" stroke="#4a64a0"/><rect x="16" y="9" width="10" height="16" rx="3" fill="#6f8fc8" stroke="#4a64a0"/><rect x="3" y="2" width="6" height="8" rx="2" fill="#8aa6d8" stroke="#4a64a0"/><rect x="18" y="2" width="6" height="8" rx="2" fill="#8aa6d8" stroke="#4a64a0"/><rect x="10" y="11" width="7" height="7" fill="#5a78b8"/><path d="M3 14h6M18 14h6" stroke="#b8cdf0"/></svg>
<div class="t" style="left:1469px;top:95px;width:100px;height:15px;line-height:15px;text-align:center;font-size:11.3px;color:#3b3b3b">Найти и</div>
<div class="t" style="left:1467px;top:108px;width:100px;height:15px;line-height:15px;text-align:center;font-size:11.3px;color:#3b3b3b">выделить</div>
<svg style="left:1543px;top:114px;" width="6" height="3" viewBox="0 0 6 3"><path d="M0 0h5l-2.5 3z" fill="#555"/></svg>
<div class="t" style="left:1387px;top:125px;width:100px;height:15px;line-height:15px;text-align:center;font-size:11.3px;color:#6b6b7b">Редактирование</div>
<div style="left:99px;top:140px;width:1491px;height:29px;background:#e2e5e9"></div>
<div style="left:99px;top:144px;width:175px;height:21px;background:#fff;border-top:1px solid #b9bec5;border-bottom:1px solid #c8ccd2;box-sizing:border-box"></div>
<div class="t" style="left:120px;top:145px;width:110px;height:19px;line-height:19px;text-align:center;font-size:11.9px;color:#1e1e1e">R15C1</div>
<svg style="left:260px;top:152px;" width="8" height="5" viewBox="0 0 8 5"><path d="M0 0h8l-4 5z" fill="#222"/></svg>
<div style="left:274px;top:144px;width:84px;height:21px;background:linear-gradient(#eceef1,#dcdfe3);border:1px solid #c0c5cc;border-radius:11px 0 0 11px;border-right:0;box-sizing:border-box"></div>
<svg style="left:281px;top:149px;" width="8" height="8" viewBox="0 0 8 8"><circle cx="4" cy="4" r="3.5" fill="#c9ccd1" stroke="#b5b9bf"/></svg>
<div class="t" style="left:340px;top:145px;width:16px;height:19px;line-height:19px;text-align:left;font-family:Liberation Serif;font-weight:bold;font-size:14px;color:#222"><i>f</i><span style="font-size:9px"><i>x</i></span></div>
<div style="left:358px;top:144px;width:1216px;height:21px;background:#fff;border:1px solid #c0c5cc;border-right:0;box-sizing:border-box"></div>
<div class="t" style="left:367px;top:145px;width:20px;height:19px;line-height:19px;text-align:left;font-size:12.5px;color:#111">1</div>
<div style="left:1574px;top:144px;width:16px;height:21px;background:linear-gradient(#f3f4f6,#dde0e4);border:1px solid #c0c5cc;box-sizing:border-box"></div>
<svg style="left:1577px;top:151px;" width="9" height="6" viewBox="0 0 9 6"><path d="M1 1 L4.5 4.5 L8 1" stroke="#444" stroke-width="1.8" fill="none"/></svg>
<div style="left:99px;top:166px;width:1491px;height:1px;background:#f4f5f7"></div>
<div style="left:99px;top:168px;width:1491px;height:1px;background:#8f98a3"></div>
<div style="left:125px;top:187px;width:1449px;height:641px;background:#fff"></div>
<div style="left:145px;top:187px;width:1px;height:641px;background:#dadcdd"></div>
<div style="left:310px;top:187px;width:1px;height:641px;background:#dadcdd"></div>
<div style="left:339px;top:187px;width:1px;height:641px;background:#dadcdd"></div>
<div style="left:365px;top:187px;width:1px;height:641px;background:#dadcdd"></div>
<div style="left:507px;top:187px;width:1px;height:641px;background:#dadcdd"></div>
<div style="left:535px;top:187px;width:1px;height:641px;background:#dadcdd"></div>
<div style="left:563px;top:187px;width:1px;height:641px;background:#dadcdd"></div>
<div style="left:591px;top:187px;width:1px;height:641px;background:#dadcdd"></div>
<div style="left:619px;top:187px;width:1px;height:641px;background:#dadcdd"></div>
<div style="left:647px;top:187px;width:1px;height:641px;background:#dadcdd"></div>
<div style="left:675px;top:187px;width:1px;height:641px;background:#dadcdd"></div>
<div style="left:703px;top:187px;width:1px;height:641px;background:#dadcdd"></div>
<div style="left:731px;top:187px;width:1px;height:641px;background:#dadcdd"></div>
<div style="left:759px;top:187px;width:1px;height:641px;background:#dadcdd"></div>
<div style="left:787px;top:187px;width:1px;height:641px;background:#dadcdd"></div>
<div style="left:815px;top:187px;width:1px;height:641px;background:#dadcdd"></div>
<div style="left:843px;top:187px;width:1px;height:641px;background:#dadcdd"></div>
<div style="left:871px;top:187px;width:1px;height:641px;background:#dadcdd"></div>
<div style="left:899px;top:187px;width:1px;height:641px;background:#dadcdd"></div>
<div style="left:927px;top:187px;width:1px;height:641px;background:#dadcdd"></div>
<div style="left:1014px;top:187px;width:1px;height:641px;background:#dadcdd"></div>
<div style="left:1042px;top:187px;width:1px;height:641px;background:#dadcdd"></div>
<div style="left:1070px;top:187px;width:1px;height:641px;background:#dadcdd"></div>
<div style="left:1098px;top:187px;width:1px;height:641px;background:#dadcdd"></div>
<div style="left:1126px;top:187px;width:1px;height:641px;background:#dadcdd"></div>
<div style="left:1154px;top:187px;width:1px;height:641px;background:#dadcdd"></div>
<div style="left:1182px;top:187px;width:1px;height:641px;background:#dadcdd"></div>
<div style="left:1210px;top:187px;width:1px;height:641px;background:#dadcdd"></div>
<div style="left:1238px;top:187px;width:1px;height:641px;background:#dadcdd"></div>
<div style="left:1266px;top:187px;width:1px;height:641px;background:#dadcdd"></div>
<div style="left:1294px;top:187px;width:1px;height:641px;background:#dadcdd"></div>
<div style="left:1322px;top:187px;width:1px;height:641px;background:#dadcdd"></div>
<div style="left:1350px;top:187px;width:1px;height:641px;background:#dadcdd"></div>
<div style="left:1378px;top:187px;width:1px;height:641px;background:#dadcdd"></div>
<div style="left:1406px;top:187px;width:1px;height:641px;background:#dadcdd"></div>
<div style="left:1434px;top:187px;width:1px;height:641px;background:#dadcdd"></div>
<div style="left:1462px;top:187px;width:1px;height:641px;background:#dadcdd"></div>
<div style="left:1554px;top:187px;width:1px;height:641px;background:#dadcdd"></div>
<div style="left:125px;top:211px;width:1449px;height:1px;background:#dadcdd"></div>
<div style="left:125px;top:231px;width:1449px;height:1px;background:#dadcdd"></div>
<div style="left:125px;top:252px;width:1449px;height:1px;background:#dadcdd"></div>
<div style="left:125px;top:273px;width:1449px;height:1px;background:#dadcdd"></div>
<div style="left:125px;top:295px;width:1449px;height:1px;background:#dadcdd"></div>
<div style="left:125px;top:320px;width:1449px;height:1px;background:#dadcdd"></div>
<div style="left:125px;top:344px;width:1449px;height:1px;background:#dadcdd"></div>
<div style="left:125px;top:366px;width:1449px;height:1px;background:#dadcdd"></div>
<div style="left:125px;top:393px;width:1449px;height:1px;background:#dadcdd"></div>
<div style="left:125px;top:410px;width:1449px;height:1px;background:#dadcdd"></div>
<div style="left:125px;top:427px;width:1449px;height:1px;background:#dadcdd"></div>
<div style="left:125px;top:444px;width:1449px;height:1px;background:#dadcdd"></div>
<div style="left:125px;top:547px;width:1449px;height:1px;background:#dadcdd"></div>
<div style="left:125px;top:565px;width:1449px;height:1px;background:#dadcdd"></div>
<div style="left:125px;top:593px;width:1449px;height:1px;background:#dadcdd"></div>
<div style="left:125px;top:621px;width:1449px;height:1px;background:#dadcdd"></div>
<div style="left:125px;top:649px;width:1449px;height:1px;background:#dadcdd"></div>
<div style="left:125px;top:677px;width:1449px;height:1px;background:#dadcdd"></div>
<div style="left:125px;top:694px;width:1449px;height:1px;background:#dadcdd"></div>
<div style="left:125px;top:711px;width:1449px;height:1px;background:#dadcdd"></div>
<div style="left:125px;top:728px;width:1449px;height:1px;background:#dadcdd"></div>
<div style="left:125px;top:747px;width:1449px;height:1px;background:#dadcdd"></div>
<div style="left:125px;top:764px;width:1449px;height:1px;background:#dadcdd"></div>
<div style="left:125px;top:783px;width:1449px;height:1px;background:#dadcdd"></div>
<div style="left:125px;top:800px;width:1449px;height:1px;background:#dadcdd"></div>
<div style="left:125px;top:817px;width:1449px;height:1px;background:#dadcdd"></div>
<div style="left:676px;top:187px;width:139px;height:24px;background:#fff"></div>
<div style="left:816px;top:187px;width:111px;height:24px;background:#fff"></div>
<div class="c" style="left:676px;top:187px;width:139px;height:24px;justify-content:flex-end;text-align:center;padding:0 0px;font-size:19px;line-height:22px;font-family:Liberation Serif;font-weight:bold;color:#000"><div>Табель №</div></div>
<div class="c" style="left:816px;top:187px;width:111px;height:24px;justify-content:flex-end;text-align:left;padding:0 3px;font-size:19px;line-height:22px;font-family:Liberation Serif;font-weight:bold;color:#000"><div>1</div></div>
<div style="left:815px;top:211px;width:113px;height:1px;background:#000"></div>
<div style="left:648px;top:212px;width:366px;height:19px;background:#fff"></div>
<div class="c" style="left:788px;top:212px;width:27px;height:19px;justify-content:flex-end;text-align:center;padding:0 0px;font-size:19.4px;line-height:22px;font-family:Liberation Serif;font-weight:bold;color:#000"><div><span style="white-space:nowrap;display:inline-block;width:400px;margin-left:-186px">учета использования рабочего времени</span></div></div>
<div style="left:620px;top:253px;width:139px;height:20px;background:#fff"></div>
<div style="left:816px;top:253px;width:111px;height:20px;background:#fff"></div>
<div class="c" style="left:620px;top:253px;width:139px;height:20px;justify-content:flex-end;text-align:right;padding:0 7px;font-size:13.1px;line-height:16px;"><div>За период с 1 по</div></div>
<div class="c" style="left:760px;top:253px;width:27px;height:20px;justify-content:flex-end;text-align:right;padding:0 2px;font-size:13.1px;line-height:16px;"><div>31</div></div>
<div style="left:759px;top:273px;width:29px;height:1px;background:#000"></div>
<div class="c" style="left:816px;top:253px;width:111px;height:20px;justify-content:flex-end;text-align:center;padding:0 0px;font-size:13.0px;line-height:16px;padding-bottom:1px"><div>августа 2015 года</div></div>
<div style="left:815px;top:273px;width:113px;height:1px;background:#000"></div>
<div style="left:1323px;top:253px;width:83px;height:20px;background:#fff"></div>
<div class="c" style="left:1122px;top:253px;width:284px;height:20px;justify-content:flex-end;text-align:right;padding:0 3px;font-size:12.7px;line-height:15px"><div>Форма по ОКУД</div></div>
<div style="left:1379px;top:274px;width:27px;height:21px;background:#fff"></div>
<div class="c" style="left:1178px;top:274px;width:228px;height:21px;justify-content:flex-end;text-align:right;padding:0 3px;font-size:12.7px;line-height:15px"><div>Дата</div></div>
<div style="left:1351px;top:296px;width:55px;height:24px;background:#fff"></div>
<div class="c" style="left:1150px;top:296px;width:256px;height:24px;justify-content:flex-end;text-align:right;padding:0 3px;font-size:12.7px;line-height:15px"><div>по ОКПО</div></div>
<div style="left:1295px;top:345px;width:111px;height:21px;background:#fff"></div>
<div class="c" style="left:1094px;top:345px;width:312px;height:21px;justify-content:flex-end;text-align:right;padding:0 3px;font-size:12.7px;line-height:15px"><div>Номер корректировки</div></div>
<div style="left:1239px;top:367px;width:167px;height:26px;background:#fff"></div>
<div class="c" style="left:1038px;top:367px;width:368px;height:26px;justify-content:flex-end;text-align:right;padding:0 3px;font-size:12.7px;line-height:15px"><div>Дата формирования документа</div></div>
<div style="left:1407px;top:232px;width:147px;height:20px;background:#fff"></div>
<div style="left:1406px;top:252px;width:149px;height:1px;background:#000"></div>
<div style="left:1407px;top:253px;width:147px;height:20px;background:#fff"></div>
<div style="left:1406px;top:273px;width:149px;height:1px;background:#000"></div>
<div style="left:1407px;top:274px;width:147px;height:21px;background:#fff"></div>
<div style="left:1406px;top:295px;width:149px;height:1px;background:#000"></div>
<div style="left:1407px;top:296px;width:147px;height:24px;background:#fff"></div>
<div style="left:1406px;top:320px;width:149px;height:1px;background:#000"></div>
<div style="left:1407px;top:321px;width:147px;height:23px;background:#fff"></div>
<div style="left:1406px;top:344px;width:149px;height:1px;background:#000"></div>
<div style="left:1407px;top:345px;width:147px;height:21px;background:#fff"></div>
<div style="left:1406px;top:366px;width:149px;height:1px;background:#000"></div>
<div style="left:1407px;top:367px;width:147px;height:26px;background:#fff"></div>
<div style="left:1406px;top:393px;width:149px;height:1px;background:#000"></div>
<div style="left:1406px;top:231px;width:149px;height:1px;background:#000"></div>
<div style="left:1406px;top:231px;width:1px;height:163px;background:#000"></div>
<div style="left:1554px;top:231px;width:1px;height:163px;background:#000"></div>
<div class="c" style="left:1407px;top:232px;width:147px;height:20px;justify-content:flex-end;text-align:center;padding:0 2px;font-size:12.7px;line-height:15px;"><div>КОДЫ</div></div>
<div class="c" style="left:1407px;top:253px;width:147px;height:20px;justify-content:flex-end;text-align:center;padding:0 2px;font-size:12.7px;line-height:15px;"><div>504421</div></div>
<div class="c" style="left:1407px;top:296px;width:147px;height:24px;justify-content:flex-end;text-align:center;padding:0 2px;font-size:12.7px;line-height:15px;"><div>5454598</div></div>
<div class="c" style="left:1407px;top:367px;width:147px;height:26px;justify-content:flex-end;text-align:center;padding:0 2px;font-size:12.7px;line-height:15px;"><div>24.09.2015</div></div>
<div style="left:146px;top:296px;width:219px;height:24px;background:#fff"></div>
<div class="c" style="left:146px;top:296px;width:219px;height:24px;justify-content:flex-end;text-align:right;padding:0 2px;font-size:12.7px;line-height:15px;"><div>Учреждение</div></div>
<div style="left:366px;top:296px;width:872px;height:24px;background:#fff"></div>
<div style="left:365px;top:320px;width:874px;height:1px;background:#000"></div>
<div style="left:146px;top:321px;width:219px;height:23px;background:#fff"></div>
<div class="c" style="left:146px;top:321px;width:219px;height:23px;justify-content:flex-end;text-align:right;padding:0 2px;font-size:12.7px;line-height:15px;"><div>Структурное подразделение</div></div>
<div style="left:366px;top:321px;width:872px;height:23px;background:#fff"></div>
<div style="left:365px;top:344px;width:874px;height:1px;background:#000"></div>
<div style="left:146px;top:345px;width:219px;height:21px;background:#fff"></div>
<div class="c" style="left:146px;top:345px;width:219px;height:21px;justify-content:flex-end;text-align:right;padding:0 2px;font-size:12.7px;line-height:15px;"><div>Вид табеля</div></div>
<div style="left:366px;top:345px;width:872px;height:21px;background:#fff"></div>
<div style="left:365px;top:366px;width:874px;height:1px;background:#000"></div>
<div class="c" style="left:366px;top:296px;width:872px;height:24px;justify-content:flex-end;text-align:center;padding:0 2px;font-size:12.7px;line-height:15px;"><div>Наша организация</div></div>
<div class="c" style="left:366px;top:345px;width:872px;height:21px;justify-content:flex-end;text-align:center;padding:0 2px;font-size:12.7px;line-height:15px;"><div>0</div></div>
<div style="left:536px;top:367px;width:251px;height:26px;background:#fff"></div>
<div class="c" style="left:539px;top:367px;width:260px;height:26px;justify-content:flex-start;font-size:12.1px;line-height:14px;padding-top:2px"><div>(первичный - 0; корректирующий -1,2 и т.п.)</div></div>
<div style="left:125px;top:411px;width:1429px;height:136px;background:#99ccff"></div>
<div style="left:125px;top:548px;width:1429px;height:17px;background:#fff"></div>
<div style="left:124px;top:410px;width:1431px;height:1px;background:#000"></div>
<div style="left:507px;top:427px;width:1048px;height:1px;background:#000"></div>
<div style="left:310px;top:444px;width:56px;height:1px;background:#000"></div>
<div style="left:124px;top:547px;width:1431px;height:1px;background:#000"></div>
<div style="left:124px;top:565px;width:1431px;height:2px;background:#000"></div>
<div style="left:310px;top:410px;width:1px;height:156px;background:#000"></div>
<div style="left:365px;top:410px;width:1px;height:156px;background:#000"></div>
<div style="left:507px;top:410px;width:1px;height:156px;background:#000"></div>
<div style="left:535px;top:427px;width:1px;height:139px;background:#000"></div>
<div style="left:563px;top:427px;width:1px;height:139px;background:#000"></div>
<div style="left:591px;top:427px;width:1px;height:139px;background:#000"></div>
<div style="left:619px;top:427px;width:1px;height:139px;background:#000"></div>
<div style="left:647px;top:427px;width:1px;height:139px;background:#000"></div>
<div style="left:675px;top:427px;width:1px;height:139px;background:#000"></div>
<div style="left:703px;top:427px;width:1px;height:139px;background:#000"></div>
<div style="left:731px;top:427px;width:1px;height:139px;background:#000"></div>
<div style="left:759px;top:427px;width:1px;height:139px;background:#000"></div>
<div style="left:787px;top:427px;width:1px;height:139px;background:#000"></div>
<div style="left:815px;top:427px;width:1px;height:139px;background:#000"></div>
<div style="left:843px;top:427px;width:1px;height:139px;background:#000"></div>
<div style="left:871px;top:427px;width:1px;height:139px;background:#000"></div>
<div style="left:899px;top:427px;width:1px;height:139px;background:#000"></div>
<div style="left:927px;top:427px;width:1px;height:139px;background:#000"></div>
<div style="left:1014px;top:427px;width:1px;height:139px;background:#000"></div>
<div style="left:1042px;top:427px;width:1px;height:139px;background:#000"></div>
<div style="left:1070px;top:427px;width:1px;height:139px;background:#000"></div>
<div style="left:1098px;top:427px;width:1px;height:139px;background:#000"></div>
<div style="left:1126px;top:427px;width:1px;height:139px;background:#000"></div>
<div style="left:1154px;top:427px;width:1px;height:139px;background:#000"></div>
<div style="left:1182px;top:427px;width:1px;height:139px;background:#000"></div>
<div style="left:1210px;top:427px;width:1px;height:139px;background:#000"></div>
<div style="left:1238px;top:427px;width:1px;height:139px;background:#000"></div>
<div style="left:1266px;top:427px;width:1px;height:139px;background:#000"></div>
<div style="left:1294px;top:427px;width:1px;height:139px;background:#000"></div>
<div style="left:1322px;top:427px;width:1px;height:139px;background:#000"></div>
<div style="left:1350px;top:427px;width:1px;height:139px;background:#000"></div>
<div style="left:1378px;top:427px;width:1px;height:139px;background:#000"></div>
<div style="left:1406px;top:427px;width:1px;height:139px;background:#000"></div>
<div style="left:1434px;top:427px;width:1px;height:139px;background:#000"></div>
<div style="left:1462px;top:427px;width:1px;height:139px;background:#000"></div>
<div style="left:1554px;top:410px;width:1px;height:156px;background:#000"></div>
<div style="left:339px;top:444px;width:1px;height:122px;background:#000"></div>
<div style="left:124px;top:410px;width:1px;height:156px;background:#000"></div>
<div class="c" style="left:125px;top:411px;width:185px;height:136px;justify-content:center;text-align:center;padding:0 2px;font-size:12.7px;line-height:15px;"><div>Фамилия, имя, отчество</div></div>
<div class="c" style="left:311px;top:411px;width:54px;height:33px;justify-content:center;text-align:center;padding:0 0px;font-size:12.7px;line-height:18px;"><div>Учетный<br>номер</div></div>
<div class="c" style="left:366px;top:411px;width:141px;height:136px;justify-content:center;text-align:center;padding:0 2px;font-size:12.7px;line-height:18px;"><div>Должность<br>(профессия)</div></div>
<div class="c" style="left:508px;top:411px;width:1046px;height:16px;justify-content:center;text-align:center;padding:0 2px;font-size:12.7px;line-height:15px;"><div>Числа месяца</div></div>
<div class="c" style="left:508px;top:428px;width:27px;height:119px;justify-content:center;text-align:center;padding:0 0px;font-size:12.7px;line-height:15px;"><div>1</div></div>
<div class="c" style="left:536px;top:428px;width:27px;height:119px;justify-content:center;text-align:center;padding:0 0px;font-size:12.7px;line-height:15px;"><div>2</div></div>
<div class="c" style="left:564px;top:428px;width:27px;height:119px;justify-content:center;text-align:center;padding:0 0px;font-size:12.7px;line-height:15px;"><div>3</div></div>
<div class="c" style="left:592px;top:428px;width:27px;height:119px;justify-content:center;text-align:center;padding:0 0px;font-size:12.7px;line-height:15px;"><div>4</div></div>
<div class="c" style="left:620px;top:428px;width:27px;height:119px;justify-content:center;text-align:center;padding:0 0px;font-size:12.7px;line-height:15px;"><div>5</div></div>
<div class="c" style="left:648px;top:428px;width:27px;height:119px;justify-content:center;text-align:center;padding:0 0px;font-size:12.7px;line-height:15px;"><div>6</div></div>
<div class="c" style="left:676px;top:428px;width:27px;height:119px;justify-content:center;text-align:center;padding:0 0px;font-size:12.7px;line-height:15px;"><div>7</div></div>
<div class="c" style="left:704px;top:428px;width:27px;height:119px;justify-content:center;text-align:center;padding:0 0px;font-size:12.7px;line-height:15px;"><div>8</div></div>
<div class="c" style="left:732px;top:428px;width:27px;height:119px;justify-content:center;text-align:center;padding:0 0px;font-size:12.7px;line-height:15px;"><div>9</div></div>
<div class="c" style="left:760px;top:428px;width:27px;height:119px;justify-content:center;text-align:center;padding:0 0px;font-size:12.7px;line-height:15px;"><div>10</div></div>
<div class="c" style="left:788px;top:428px;width:27px;height:119px;justify-content:center;text-align:center;padding:0 0px;font-size:12.7px;line-height:15px;"><div>11</div></div>
<div class="c" style="left:816px;top:428px;width:27px;height:119px;justify-content:center;text-align:center;padding:0 0px;font-size:12.7px;line-height:15px;"><div>12</div></div>
<div class="c" style="left:844px;top:428px;width:27px;height:119px;justify-content:center;text-align:center;padding:0 0px;font-size:12.7px;line-height:15px;"><div>13</div></div>
<div class="c" style="left:872px;top:428px;width:27px;height:119px;justify-content:center;text-align:center;padding:0 0px;font-size:12.7px;line-height:15px;"><div>14</div></div>
<div class="c" style="left:900px;top:428px;width:27px;height:119px;justify-content:center;text-align:center;padding:0 0px;font-size:12.7px;line-height:15px;"><div>15</div></div>
<div class="c" style="left:1015px;top:428px;width:27px;height:119px;justify-content:center;text-align:center;padding:0 0px;font-size:12.7px;line-height:15px;"><div>16</div></div>
<div class="c" style="left:1043px;top:428px;width:27px;height:119px;justify-content:center;text-align:center;padding:0 0px;font-size:12.7px;line-height:15px;"><div>17</div></div>
<div class="c" style="left:1071px;top:428px;width:27px;height:119px;justify-content:center;text-align:center;padding:0 0px;font-size:12.7px;line-height:15px;"><div>18</div></div>
<div class="c" style="left:1099px;top:428px;width:27px;height:119px;justify-content:center;text-align:center;padding:0 0px;font-size:12.7px;line-height:15px;"><div>19</div></div>
<div class="c" style="left:1127px;top:428px;width:27px;height:119px;justify-content:center;text-align:center;padding:0 0px;font-size:12.7px;line-height:15px;"><div>20</div></div>
<div class="c" style="left:1155px;top:428px;width:27px;height:119px;justify-content:center;text-align:center;padding:0 0px;font-size:12.7px;line-height:15px;"><div>21</div></div>
<div class="c" style="left:1183px;top:428px;width:27px;height:119px;justify-content:center;text-align:center;padding:0 0px;font-size:12.7px;line-height:15px;"><div>22</div></div>
<div class="c" style="left:1211px;top:428px;width:27px;height:119px;justify-content:center;text-align:center;padding:0 0px;font-size:12.7px;line-height:15px;"><div>23</div></div>
<div class="c" style="left:1239px;top:428px;width:27px;height:119px;justify-content:center;text-align:center;padding:0 0px;font-size:12.7px;line-height:15px;"><div>24</div></div>
<div class="c" style="left:1267px;top:428px;width:27px;height:119px;justify-content:center;text-align:center;padding:0 0px;font-size:12.7px;line-height:15px;"><div>25</div></div>
<div class="c" style="left:1295px;top:428px;width:27px;height:119px;justify-content:center;text-align:center;padding:0 0px;font-size:12.7px;line-height:15px;"><div>26</div></div>
<div class="c" style="left:1323px;top:428px;width:27px;height:119px;justify-content:center;text-align:center;padding:0 0px;font-size:12.7px;line-height:15px;"><div>27</div></div>
<div class="c" style="left:1351px;top:428px;width:27px;height:119px;justify-content:center;text-align:center;padding:0 0px;font-size:12.7px;line-height:15px;"><div>28</div></div>
<div class="c" style="left:1379px;top:428px;width:27px;height:119px;justify-content:center;text-align:center;padding:0 0px;font-size:12.7px;line-height:15px;"><div>29</div></div>
<div class="c" style="left:1407px;top:428px;width:27px;height:119px;justify-content:center;text-align:center;padding:0 0px;font-size:12.7px;line-height:15px;"><div>30</div></div>
<div class="c" style="left:1435px;top:428px;width:27px;height:119px;justify-content:center;text-align:center;padding:0 0px;font-size:12.7px;line-height:15px;"><div>31</div></div>
<div class="c" style="left:928px;top:428px;width:86px;height:119px;justify-content:center;text-align:center;padding:0 0px;font-size:12.3px;line-height:16px;"><div>Итого дней<br>(часов) явок<br>(неявок) с 1<br>по 15</div></div>
<div class="c" style="left:1463px;top:428px;width:91px;height:119px;justify-content:center;text-align:center;padding:0 0px;font-size:12.3px;line-height:16px;"><div>Итого дней<br>(часов) явок<br>(неявок) за<br>месяц</div></div>
<div class="c" style="left:125px;top:548px;width:185px;height:17px;justify-content:center;text-align:center;padding:0 0px;font-size:9.5px;line-height:11px;"><div>1</div></div>
<div class="c" style="left:311px;top:548px;width:28px;height:17px;justify-content:center;text-align:center;padding:0 0px;font-size:9.5px;line-height:11px;"><div>2</div></div>
<div class="c" style="left:340px;top:548px;width:25px;height:17px;justify-content:center;text-align:center;padding:0 0px;font-size:9.5px;line-height:11px;"><div>3</div></div>
<div class="c" style="left:366px;top:548px;width:141px;height:17px;justify-content:center;text-align:center;padding:0 0px;font-size:9.5px;line-height:11px;"><div>4</div></div>
<div class="c" style="left:508px;top:548px;width:27px;height:17px;justify-content:center;text-align:center;padding:0 0px;font-size:9.5px;line-height:11px;"><div>5</div></div>
<div class="c" style="left:536px;top:548px;width:27px;height:17px;justify-content:center;text-align:center;padding:0 0px;font-size:9.5px;line-height:11px;"><div>6</div></div>
<div class="c" style="left:564px;top:548px;width:27px;height:17px;justify-content:center;text-align:center;padding:0 0px;font-size:9.5px;line-height:11px;"><div>7</div></div>
<div class="c" style="left:592px;top:548px;width:27px;height:17px;justify-content:center;text-align:center;padding:0 0px;font-size:9.5px;line-height:11px;"><div>8</div></div>
<div class="c" style="left:620px;top:548px;width:27px;height:17px;justify-content:center;text-align:center;padding:0 0px;font-size:9.5px;line-height:11px;"><div>9</div></div>
<div class="c" style="left:648px;top:548px;width:27px;height:17px;justify-content:center;text-align:center;padding:0 0px;font-size:9.5px;line-height:11px;"><div>10</div></div>
<div class="c" style="left:676px;top:548px;width:27px;height:17px;justify-content:center;text-align:center;padding:0 0px;font-size:9.5px;line-height:11px;"><div>11</div></div>
<div class="c" style="left:704px;top:548px;width:27px;height:17px;justify-content:center;text-align:center;padding:0 0px;font-size:9.5px;line-height:11px;"><div>12</div></div>
<div class="c" style="left:732px;top:548px;width:27px;height:17px;justify-content:center;text-align:center;padding:0 0px;font-size:9.5px;line-height:11px;"><div>13</div></div>
<div class="c" style="left:760px;top:548px;width:27px;height:17px;justify-content:center;text-align:center;padding:0 0px;font-size:9.5px;line-height:11px;"><div>14</div></div>
<div class="c" style="left:788px;top:548px;width:27px;height:17px;justify-content:center;text-align:center;padding:0 0px;font-size:9.5px;line-height:11px;"><div>15</div></div>
<div class="c" style="left:816px;top:548px;width:27px;height:17px;justify-content:center;text-align:center;padding:0 0px;font-size:9.5px;line-height:11px;"><div>16</div></div>
<div class="c" style="left:844px;top:548px;width:27px;height:17px;justify-content:center;text-align:center;padding:0 0px;font-size:9.5px;line-height:11px;"><div>17</div></div>
<div class="c" style="left:872px;top:548px;width:27px;height:17px;justify-content:center;text-align:center;padding:0 0px;font-size:9.5px;line-height:11px;"><div>18</div></div>
<div class="c" style="left:900px;top:548px;width:27px;height:17px;justify-content:center;text-align:center;padding:0 0px;font-size:9.5px;line-height:11px;"><div>19</div></div>
<div class="c" style="left:928px;top:548px;width:86px;height:17px;justify-content:center;text-align:center;padding:0 0px;font-size:9.5px;line-height:11px;"><div>20</div></div>
<div class="c" style="left:1015px;top:548px;width:27px;height:17px;justify-content:center;text-align:center;padding:0 0px;font-size:9.5px;line-height:11px;"><div>21</div></div>
<div class="c" style="left:1043px;top:548px;width:27px;height:17px;justify-content:center;text-align:center;padding:0 0px;font-size:9.5px;line-height:11px;"><div>22</div></div>
<div class="c" style="left:1071px;top:548px;width:27px;height:17px;justify-content:center;text-align:center;padding:0 0px;font-size:9.5px;line-height:11px;"><div>23</div></div>
<div class="c" style="left:1099px;top:548px;width:27px;height:17px;justify-content:center;text-align:center;padding:0 0px;font-size:9.5px;line-height:11px;"><div>24</div></div>
<div class="c" style="left:1127px;top:548px;width:27px;height:17px;justify-content:center;text-align:center;padding:0 0px;font-size:9.5px;line-height:11px;"><div>25</div></div>
<div class="c" style="left:1155px;top:548px;width:27px;height:17px;justify-content:center;text-align:center;padding:0 0px;font-size:9.5px;line-height:11px;"><div>26</div></div>
<div class="c" style="left:1183px;top:548px;width:27px;height:17px;justify-content:center;text-align:center;padding:0 0px;font-size:9.5px;line-height:11px;"><div>27</div></div>
<div class="c" style="left:1211px;top:548px;width:27px;height:17px;justify-content:center;text-align:center;padding:0 0px;font-size:9.5px;line-height:11px;"><div>28</div></div>
<div class="c" style="left:1239px;top:548px;width:27px;height:17px;justify-content:center;text-align:center;padding:0 0px;font-size:9.5px;line-height:11px;"><div>29</div></div>
<div class="c" style="left:1267px;top:548px;width:27px;height:17px;justify-content:center;text-align:center;padding:0 0px;font-size:9.5px;line-height:11px;"><div>30</div></div>
<div class="c" style="left:1295px;top:548px;width:27px;height:17px;justify-content:center;text-align:center;padding:0 0px;font-size:9.5px;line-height:11px;"><div>31</div></div>
<div class="c" style="left:1323px;top:548px;width:27px;height:17px;justify-content:center;text-align:center;padding:0 0px;font-size:9.5px;line-height:11px;"><div>32</div></div>
<div class="c" style="left:1351px;top:548px;width:27px;height:17px;justify-content:center;text-align:center;padding:0 0px;font-size:9.5px;line-height:11px;"><div>33</div></div>
<div class="c" style="left:1379px;top:548px;width:27px;height:17px;justify-content:center;text-align:center;padding:0 0px;font-size:9.5px;line-height:11px;"><div>34</div></div>
<div class="c" style="left:1407px;top:548px;width:27px;height:17px;justify-content:center;text-align:center;padding:0 0px;font-size:9.5px;line-height:11px;"><div>35</div></div>
<div class="c" style="left:1435px;top:548px;width:27px;height:17px;justify-content:center;text-align:center;padding:0 0px;font-size:9.5px;line-height:11px;"><div>36</div></div>
<div class="c" style="left:1463px;top:548px;width:91px;height:17px;justify-content:center;text-align:center;padding:0 0px;font-size:9.5px;line-height:11px;"><div>37</div></div>
<div style="left:125px;top:566px;width:20px;height:55px;background:#fff"></div>
<div style="left:146px;top:566px;width:164px;height:55px;background:#fff"></div>
<div style="left:311px;top:566px;width:54px;height:55px;background:#fff"></div>
<div style="left:366px;top:566px;width:141px;height:55px;background:#fff"></div>
<div class="c" style="left:125px;top:566px;width:20px;height:55px;justify-content:center;text-align:left;padding:0 2px;font-size:12.7px;line-height:15px;"><div>1</div></div>
<div class="c" style="left:146px;top:566px;width:164px;height:55px;justify-content:center;text-align:left;padding:0 2px;font-size:12.7px;line-height:18px;"><div>Иванов Петр Сергеевич</div></div>
<div class="c" style="left:311px;top:566px;width:54px;height:55px;justify-content:center;text-align:center;padding:0 2px;font-size:10.6px;line-height:13px;"><div>1</div></div>
<div class="c" style="left:366px;top:566px;width:141px;height:55px;justify-content:center;text-align:left;padding:0 2px;font-size:11px;line-height:13px;"><div>Генеральный директор</div></div>
<div style="left:508px;top:566px;width:27px;height:27px;background:#ffff00"></div>
<div style="left:508px;top:594px;width:27px;height:27px;background:#ffff00"></div>
<div class="c" style="left:508px;top:594px;width:27px;height:27px;justify-content:center;text-align:center;padding:0 0px;font-size:12.7px;line-height:15px;"><div>В</div></div>
<div style="left:508px;top:593px;width:27px;height:1px;background-image:linear-gradient(90deg,#000 50%,transparent 50%);background-size:2px 1px"></div>
<div style="left:536px;top:566px;width:27px;height:27px;background:#ffff00"></div>
<div style="left:536px;top:594px;width:27px;height:27px;background:#ffff00"></div>
<div class="c" style="left:536px;top:594px;width:27px;height:27px;justify-content:center;text-align:center;padding:0 0px;font-size:12.7px;line-height:15px;"><div>В</div></div>
<div style="left:536px;top:593px;width:27px;height:1px;background-image:linear-gradient(90deg,#000 50%,transparent 50%);background-size:2px 1px"></div>
<div class="c" style="left:564px;top:566px;width:27px;height:27px;justify-content:center;text-align:center;padding:0 0px;font-size:12.7px;line-height:15px;"><div>8</div></div>
<div class="c" style="left:564px;top:594px;width:27px;height:27px;justify-content:center;text-align:center;padding:0 0px;font-size:12.7px;line-height:15px;"><div>Ф</div></div>
<svg style="left:564px;top:566px;" width="6" height="6" viewBox="0 0 6 6"><path d="M0 0h6L0 6z" fill="#008000"/></svg>
<div style="left:564px;top:593px;width:27px;height:1px;background-image:linear-gradient(90deg,#000 50%,transparent 50%);background-size:2px 1px"></div>
<div class="c" style="left:592px;top:566px;width:27px;height:27px;justify-content:center;text-align:center;padding:0 0px;font-size:12.7px;line-height:15px;"><div>8</div></div>
<div class="c" style="left:592px;top:594px;width:27px;height:27px;justify-content:center;text-align:center;padding:0 0px;font-size:12.7px;line-height:15px;"><div>Ф</div></div>
<svg style="left:592px;top:566px;" width="6" height="6" viewBox="0 0 6 6"><path d="M0 0h6L0 6z" fill="#008000"/></svg>
<div style="left:592px;top:593px;width:27px;height:1px;background-image:linear-gradient(90deg,#000 50%,transparent 50%);background-size:2px 1px"></div>
<div class="c" style="left:620px;top:566px;width:27px;height:27px;justify-content:center;text-align:center;padding:0 0px;font-size:12.7px;line-height:15px;"><div>8</div></div>
<div class="c" style="left:620px;top:594px;width:27px;height:27px;justify-content:center;text-align:center;padding:0 0px;font-size:12.7px;line-height:15px;"><div>Ф</div></div>
<svg style="left:620px;top:566px;" width="6" height="6" viewBox="0 0 6 6"><path d="M0 0h6L0 6z" fill="#008000"/></svg>
<div style="left:620px;top:593px;width:27px;height:1px;background-image:linear-gradient(90deg,#000 50%,transparent 50%);background-size:2px 1px"></div>
<div class="c" style="left:648px;top:566px;width:27px;height:27px;justify-content:center;text-align:center;padding:0 0px;font-size:12.7px;line-height:15px;"><div>8</div></div>
<div class="c" style="left:648px;top:594px;width:27px;height:27px;justify-content:center;text-align:center;padding:0 0px;font-size:12.7px;line-height:15px;"><div>Ф</div></div>
<svg style="left:648px;top:566px;" width="6" height="6" viewBox="0 0 6 6"><path d="M0 0h6L0 6z" fill="#008000"/></svg>
<div style="left:648px;top:593px;width:27px;height:1px;background-image:linear-gradient(90deg,#000 50%,transparent 50%);background-size:2px 1px"></div>
<div class="c" style="left:676px;top:566px;width:27px;height:27px;justify-content:center;text-align:center;padding:0 0px;font-size:12.7px;line-height:15px;"><div>8</div></div>
<div class="c" style="left:676px;top:594px;width:27px;height:27px;justify-content:center;text-align:center;padding:0 0px;font-size:12.7px;line-height:15px;"><div>Ф</div></div>
<svg style="left:676px;top:566px;" width="6" height="6" viewBox="0 0 6 6"><path d="M0 0h6L0 6z" fill="#008000"/></svg>
<div style="left:676px;top:593px;width:27px;height:1px;background-image:linear-gradient(90deg,#000 50%,transparent 50%);background-size:2px 1px"></div>
<div style="left:704px;top:566px;width:27px;height:27px;background:#ffff00"></div>
<div style="left:704px;top:594px;width:27px;height:27px;background:#ffff00"></div>
<div class="c" style="left:704px;top:594px;width:27px;height:27px;justify-content:center;text-align:center;padding:0 0px;font-size:12.7px;line-height:15px;"><div>В</div></div>
<div style="left:704px;top:593px;width:27px;height:1px;background-image:linear-gradient(90deg,#000 50%,transparent 50%);background-size:2px 1px"></div>
<div style="left:732px;top:566px;width:27px;height:27px;background:#ffff00"></div>
<div style="left:732px;top:594px;width:27px;height:27px;background:#ffff00"></div>
<div class="c" style="left:732px;top:594px;width:27px;height:27px;justify-content:center;text-align:center;padding:0 0px;font-size:12.7px;line-height:15px;"><div>В</div></div>
<div style="left:732px;top:593px;width:27px;height:1px;background-image:linear-gradient(90deg,#000 50%,transparent 50%);background-size:2px 1px"></div>
<div class="c" style="left:760px;top:566px;width:27px;height:27px;justify-content:center;text-align:center;padding:0 0px;font-size:12.7px;line-height:15px;"><div>8</div></div>
<div class="c" style="left:760px;top:594px;width:27px;height:27px;justify-content:center;text-align:center;padding:0 0px;font-size:12.7px;line-height:15px;"><div>Ф</div></div>
<svg style="left:760px;top:566px;" width="6" height="6" viewBox="0 0 6 6"><path d="M0 0h6L0 6z" fill="#008000"/></svg>
<div style="left:760px;top:593px;width:27px;height:1px;background-image:linear-gradient(90deg,#000 50%,transparent 50%);background-size:2px 1px"></div>
<div class="c" style="left:788px;top:566px;width:27px;height:27px;justify-content:center;text-align:center;padding:0 0px;font-size:12.7px;line-height:15px;"><div>8</div></div>
<div class="c" style="left:788px;top:594px;width:27px;height:27px;justify-content:center;text-align:center;padding:0 0px;font-size:12.7px;line-height:15px;"><div>Ф</div></div>
<svg style="left:788px;top:566px;" width="6" height="6" viewBox="0 0 6 6"><path d="M0 0h6L0 6z" fill="#008000"/></svg>
<div style="left:788px;top:593px;width:27px;height:1px;background-image:linear-gradient(90deg,#000 50%,transparent 50%);background-size:2px 1px"></div>
<div class="c" style="left:816px;top:566px;width:27px;height:27px;justify-content:center;text-align:center;padding:0 0px;font-size:12.7px;line-height:15px;"><div>8</div></div>
<div class="c" style="left:816px;top:594px;width:27px;height:27px;justify-content:center;text-align:center;padding:0 0px;font-size:12.7px;line-height:15px;"><div>Ф</div></div>
<svg style="left:816px;top:566px;" width="6" height="6" viewBox="0 0 6 6"><path d="M0 0h6L0 6z" fill="#008000"/></svg>
<div style="left:816px;top:593px;width:27px;height:1px;background-image:linear-gradient(90deg,#000 50%,transparent 50%);background-size:2px 1px"></div>
<div class="c" style="left:844px;top:566px;width:27px;height:27px;justify-content:center;text-align:center;padding:0 0px;font-size:12.7px;line-height:15px;"><div>8</div></div>
<div class="c" style="left:844px;top:594px;width:27px;height:27px;justify-content:center;text-align:center;padding:0 0px;font-size:12.7px;line-height:15px;"><div>Ф</div></div>
<svg style="left:844px;top:566px;" width="6" height="6" viewBox="0 0 6 6"><path d="M0 0h6L0 6z" fill="#008000"/></svg>
<div style="left:844px;top:593px;width:27px;height:1px;background-image:linear-gradient(90deg,#000 50%,transparent 50%);background-size:2px 1px"></div>
<div class="c" style="left:872px;top:566px;width:27px;height:27px;justify-content:center;text-align:center;padding:0 0px;font-size:12.7px;line-height:15px;"><div>8</div></div>
<div class="c" style="left:872px;top:594px;width:27px;height:27px;justify-content:center;text-align:center;padding:0 0px;font-size:12.7px;line-height:15px;"><div>Ф</div></div>
<svg style="left:872px;top:566px;" width="6" height="6" viewBox="0 0 6 6"><path d="M0 0h6L0 6z" fill="#008000"/></svg>
<div style="left:872px;top:593px;width:27px;height:1px;background-image:linear-gradient(90deg,#000 50%,transparent 50%);background-size:2px 1px"></div>
<div style="left:900px;top:566px;width:27px;height:27px;background:#ffff00"></div>
<div style="left:900px;top:594px;width:27px;height:27px;background:#ffff00"></div>
<div class="c" style="left:900px;top:594px;width:27px;height:27px;justify-content:center;text-align:center;padding:0 0px;font-size:12.7px;line-height:15px;"><div>В</div></div>
<div style="left:900px;top:593px;width:27px;height:1px;background-image:linear-gradient(90deg,#000 50%,transparent 50%);background-size:2px 1px"></div>
<div style="left:1015px;top:566px;width:27px;height:27px;background:#ffff00"></div>
<div style="left:1015px;top:594px;width:27px;height:27px;background:#ffff00"></div>
<div class="c" style="left:1015px;top:594px;width:27px;height:27px;justify-content:center;text-align:center;padding:0 0px;font-size:12.7px;line-height:15px;"><div>В</div></div>
<div style="left:1015px;top:593px;width:27px;height:1px;background-image:linear-gradient(90deg,#000 50%,transparent 50%);background-size:2px 1px"></div>
<div class="c" style="left:1043px;top:566px;width:27px;height:27px;justify-content:center;text-align:center;padding:0 0px;font-size:12.7px;line-height:15px;"><div>8</div></div>
<div class="c" style="left:1043px;top:594px;width:27px;height:27px;justify-content:center;text-align:center;padding:0 0px;font-size:12.7px;line-height:15px;"><div>Ф</div></div>
<svg style="left:1043px;top:566px;" width="6" height="6" viewBox="0 0 6 6"><path d="M0 0h6L0 6z" fill="#008000"/></svg>
<div style="left:1043px;top:593px;width:27px;height:1px;background-image:linear-gradient(90deg,#000 50%,transparent 50%);background-size:2px 1px"></div>
<div class="c" style="left:1071px;top:566px;width:27px;height:27px;justify-content:center;text-align:center;padding:0 0px;font-size:12.7px;line-height:15px;"><div>8</div></div>
<div class="c" style="left:1071px;top:594px;width:27px;height:27px;justify-content:center;text-align:center;padding:0 0px;font-size:12.7px;line-height:15px;"><div>Ф</div></div>
<svg style="left:1071px;top:566px;" width="6" height="6" viewBox="0 0 6 6"><path d="M0 0h6L0 6z" fill="#008000"/></svg>
<div style="left:1071px;top:593px;width:27px;height:1px;background-image:linear-gradient(90deg,#000 50%,transparent 50%);background-size:2px 1px"></div>
<div class="c" style="left:1099px;top:566px;width:27px;height:27px;justify-content:center;text-align:center;padding:0 0px;font-size:12.7px;line-height:15px;"><div>8</div></div>
<div class="c" style="left:1099px;top:594px;width:27px;height:27px;justify-content:center;text-align:center;padding:0 0px;font-size:12.7px;line-height:15px;"><div>Ф</div></div>
<svg style="left:1099px;top:566px;" width="6" height="6" viewBox="0 0 6 6"><path d="M0 0h6L0 6z" fill="#008000"/></svg>
<div style="left:1099px;top:593px;width:27px;height:1px;background-image:linear-gradient(90deg,#000 50%,transparent 50%);background-size:2px 1px"></div>
<div class="c" style="left:1127px;top:566px;width:27px;height:27px;justify-content:center;text-align:center;padding:0 0px;font-size:12.7px;line-height:15px;"><div>8</div></div>
<div class="c" style="left:1127px;top:594px;width:27px;height:27px;justify-content:center;text-align:center;padding:0 0px;font-size:12.7px;line-height:15px;"><div>Ф</div></div>
<svg style="left:1127px;top:566px;" width="6" height="6" viewBox="0 0 6 6"><path d="M0 0h6L0 6z" fill="#008000"/></svg>
<div style="left:1127px;top:593px;width:27px;height:1px;background-image:linear-gradient(90deg,#000 50%,transparent 50%);background-size:2px 1px"></div>
<div class="c" style="left:1155px;top:566px;width:27px;height:27px;justify-content:center;text-align:center;padding:0 0px;font-size:12.7px;line-height:15px;"><div>8</div></div>
<div class="c" style="left:1155px;top:594px;width:27px;height:27px;justify-content:center;text-align:center;padding:0 0px;font-size:12.7px;line-height:15px;"><div>Ф</div></div>
<svg style="left:1155px;top:566px;" width="6" height="6" viewBox="0 0 6 6"><path d="M0 0h6L0 6z" fill="#008000"/></svg>
<div style="left:1155px;top:593px;width:27px;height:1px;background-image:linear-gradient(90deg,#000 50%,transparent 50%);background-size:2px 1px"></div>
<div style="left:1183px;top:566px;width:27px;height:27px;background:#ffff00"></div>
<div style="left:1183px;top:594px;width:27px;height:27px;background:#ffff00"></div>
<div class="c" style="left:1183px;top:594px;width:27px;height:27px;justify-content:center;text-align:center;padding:0 0px;font-size:12.7px;line-height:15px;"><div>В</div></div>
<div style="left:1183px;top:593px;width:27px;height:1px;background-image:linear-gradient(90deg,#000 50%,transparent 50%);background-size:2px 1px"></div>
<div style="left:1211px;top:566px;width:27px;height:27px;background:#ffff00"></div>
<div style="left:1211px;top:594px;width:27px;height:27px;background:#ffff00"></div>
<div class="c" style="left:1211px;top:594px;width:27px;height:27px;justify-content:center;text-align:center;padding:0 0px;font-size:12.7px;line-height:15px;"><div>В</div></div>
<div style="left:1211px;top:593px;width:27px;height:1px;background-image:linear-gradient(90deg,#000 50%,transparent 50%);background-size:2px 1px"></div>
<div class="c" style="left:1239px;top:566px;width:27px;height:27px;justify-content:center;text-align:center;padding:0 0px;font-size:12.7px;line-height:15px;"><div>8</div></div>
<div class="c" style="left:1239px;top:594px;width:27px;height:27px;justify-content:center;text-align:center;padding:0 0px;font-size:12.7px;line-height:15px;"><div>Ф</div></div>
<svg style="left:1239px;top:566px;" width="6" height="6" viewBox="0 0 6 6"><path d="M0 0h6L0 6z" fill="#008000"/></svg>
<div style="left:1239px;top:593px;width:27px;height:1px;background-image:linear-gradient(90deg,#000 50%,transparent 50%);background-size:2px 1px"></div>
<div class="c" style="left:1267px;top:566px;width:27px;height:27px;justify-content:center;text-align:center;padding:0 0px;font-size:12.7px;line-height:15px;"><div>8</div></div>
<div class="c" style="left:1267px;top:594px;width:27px;height:27px;justify-content:center;text-align:center;padding:0 0px;font-size:12.7px;line-height:15px;"><div>Ф</div></div>
<svg style="left:1267px;top:566px;" width="6" height="6" viewBox="0 0 6 6"><path d="M0 0h6L0 6z" fill="#008000"/></svg>
<div style="left:1267px;top:593px;width:27px;height:1px;background-image:linear-gradient(90deg,#000 50%,transparent 50%);background-size:2px 1px"></div>
<div class="c" style="left:1295px;top:566px;width:27px;height:27px;justify-content:center;text-align:center;padding:0 0px;font-size:12.7px;line-height:15px;"><div>8</div></div>
<div class="c" style="left:1295px;top:594px;width:27px;height:27px;justify-content:center;text-align:center;padding:0 0px;font-size:12.7px;line-height:15px;"><div>Ф</div></div>
<svg style="left:1295px;top:566px;" width="6" height="6" viewBox="0 0 6 6"><path d="M0 0h6L0 6z" fill="#008000"/></svg>
<div style="left:1295px;top:593px;width:27px;height:1px;background-image:linear-gradient(90deg,#000 50%,transparent 50%);background-size:2px 1px"></div>
<div class="c" style="left:1323px;top:566px;width:27px;height:27px;justify-content:center;text-align:center;padding:0 0px;font-size:12.7px;line-height:15px;"><div>8</div></div>
<div class="c" style="left:1323px;top:594px;width:27px;height:27px;justify-content:center;text-align:center;padding:0 0px;font-size:12.7px;line-height:15px;"><div>Ф</div></div>
<svg style="left:1323px;top:566px;" width="6" height="6" viewBox="0 0 6 6"><path d="M0 0h6L0 6z" fill="#008000"/></svg>
<div style="left:1323px;top:593px;width:27px;height:1px;background-image:linear-gradient(90deg,#000 50%,transparent 50%);background-size:2px 1px"></div>
<div class="c" style="left:1351px;top:566px;width:27px;height:27px;justify-content:center;text-align:center;padding:0 0px;font-size:12.7px;line-height:15px;"><div>8</div></div>
<div class="c" style="left:1351px;top:594px;width:27px;height:27px;justify-content:center;text-align:center;padding:0 0px;font-size:12.7px;line-height:15px;"><div>Ф</div></div>
<svg style="left:1351px;top:566px;" width="6" height="6" viewBox="0 0 6 6"><path d="M0 0h6L0 6z" fill="#008000"/></svg>
<div style="left:1351px;top:593px;width:27px;height:1px;background-image:linear-gradient(90deg,#000 50%,transparent 50%);background-size:2px 1px"></div>
<div style="left:1379px;top:566px;width:27px;height:27px;background:#ffff00"></div>
<div style="left:1379px;top:594px;width:27px;height:27px;background:#ffff00"></div>
<div class="c" style="left:1379px;top:594px;width:27px;height:27px;justify-content:center;text-align:center;padding:0 0px;font-size:12.7px;line-height:15px;"><div>В</div></div>
<div style="left:1379px;top:593px;width:27px;height:1px;background-image:linear-gradient(90deg,#000 50%,transparent 50%);background-size:2px 1px"></div>
<div style="left:1407px;top:566px;width:27px;height:27px;background:#ffff00"></div>
<div style="left:1407px;top:594px;width:27px;height:27px;background:#ffff00"></div>
<div class="c" style="left:1407px;top:594px;width:27px;height:27px;justify-content:center;text-align:center;padding:0 0px;font-size:12.7px;line-height:15px;"><div>В</div></div>
<div style="left:1407px;top:593px;width:27px;height:1px;background-image:linear-gradient(90deg,#000 50%,transparent 50%);background-size:2px 1px"></div>
<div class="c" style="left:1435px;top:566px;width:27px;height:27px;justify-content:center;text-align:center;padding:0 0px;font-size:12.7px;line-height:15px;"><div>8</div></div>
<div class="c" style="left:1435px;top:594px;width:27px;height:27px;justify-content:center;text-align:center;padding:0 0px;font-size:12.7px;line-height:15px;"><div>Ф</div></div>
<svg style="left:1435px;top:566px;" width="6" height="6" viewBox="0 0 6 6"><path d="M0 0h6L0 6z" fill="#008000"/></svg>
<div style="left:1435px;top:593px;width:27px;height:1px;background-image:linear-gradient(90deg,#000 50%,transparent 50%);background-size:2px 1px"></div>
<div style="left:928px;top:566px;width:86px;height:55px;background:#99ccff"></div>
<div style="left:1463px;top:566px;width:91px;height:55px;background:#99ccff"></div>
<div class="c" style="left:928px;top:566px;width:86px;height:55px;justify-content:center;text-align:center;padding:0 0px;font-size:12.7px;line-height:15px;"><div>Ф 10 (80,00)</div></div>
<div class="c" style="left:1463px;top:566px;width:91px;height:55px;justify-content:center;text-align:center;padding:0 0px;font-size:12.7px;line-height:15px;"><div>Ф 21 (168,00)</div></div>
<svg style="left:311px;top:566px;" width="6" height="6" viewBox="0 0 6 6"><path d="M0 0h6L0 6z" fill="#008000"/></svg>
<div style="left:124px;top:621px;width:1431px;height:1px;background:#000"></div>
<div style="left:124px;top:565px;width:1px;height:57px;background:#000"></div>
<div style="left:145px;top:565px;width:1px;height:57px;background:#000"></div>
<div style="left:310px;top:565px;width:1px;height:57px;background:#000"></div>
<div style="left:365px;top:565px;width:1px;height:57px;background:#000"></div>
<div style="left:507px;top:565px;width:1px;height:57px;background:#000"></div>
<div style="left:535px;top:565px;width:1px;height:57px;background:#000"></div>
<div style="left:563px;top:565px;width:1px;height:57px;background:#000"></div>
<div style="left:591px;top:565px;width:1px;height:57px;background:#000"></div>
<div style="left:619px;top:565px;width:1px;height:57px;background:#000"></div>
<div style="left:647px;top:565px;width:1px;height:57px;background:#000"></div>
<div style="left:675px;top:565px;width:1px;height:57px;background:#000"></div>
<div style="left:703px;top:565px;width:1px;height:57px;background:#000"></div>
<div style="left:731px;top:565px;width:1px;height:57px;background:#000"></div>
<div style="left:759px;top:565px;width:1px;height:57px;background:#000"></div>
<div style="left:787px;top:565px;width:1px;height:57px;background:#000"></div>
<div style="left:815px;top:565px;width:1px;height:57px;background:#000"></div>
<div style="left:843px;top:565px;width:1px;height:57px;background:#000"></div>
<div style="left:871px;top:565px;width:1px;height:57px;background:#000"></div>
<div style="left:899px;top:565px;width:1px;height:57px;background:#000"></div>
<div style="left:927px;top:565px;width:1px;height:57px;background:#000"></div>
<div style="left:1014px;top:565px;width:1px;height:57px;background:#000"></div>
<div style="left:1042px;top:565px;width:1px;height:57px;background:#000"></div>
<div style="left:1070px;top:565px;width:1px;height:57px;background:#000"></div>
<div style="left:1098px;top:565px;width:1px;height:57px;background:#000"></div>
<div style="left:1126px;top:565px;width:1px;height:57px;background:#000"></div>
<div style="left:1154px;top:565px;width:1px;height:57px;background:#000"></div>
<div style="left:1182px;top:565px;width:1px;height:57px;background:#000"></div>
<div style="left:1210px;top:565px;width:1px;height:57px;background:#000"></div>
<div style="left:1238px;top:565px;width:1px;height:57px;background:#000"></div>
<div style="left:1266px;top:565px;width:1px;height:57px;background:#000"></div>
<div style="left:1294px;top:565px;width:1px;height:57px;background:#000"></div>
<div style="left:1322px;top:565px;width:1px;height:57px;background:#000"></div>
<div style="left:1350px;top:565px;width:1px;height:57px;background:#000"></div>
<div style="left:1378px;top:565px;width:1px;height:57px;background:#000"></div>
<div style="left:1406px;top:565px;width:1px;height:57px;background:#000"></div>
<div style="left:1434px;top:565px;width:1px;height:57px;background:#000"></div>
<div style="left:1462px;top:565px;width:1px;height:57px;background:#000"></div>
<div style="left:1554px;top:565px;width:1px;height:57px;background:#000"></div>
<div style="left:125px;top:622px;width:20px;height:55px;background:#fff"></div>
<div style="left:146px;top:622px;width:164px;height:55px;background:#fff"></div>
<div style="left:311px;top:622px;width:54px;height:55px;background:#fff"></div>
<div style="left:366px;top:622px;width:141px;height:55px;background:#fff"></div>
<div class="c" style="left:125px;top:622px;width:20px;height:55px;justify-content:center;text-align:left;padding:0 2px;font-size:12.7px;line-height:15px;"><div>2</div></div>
<div class="c" style="left:146px;top:622px;width:164px;height:55px;justify-content:center;text-align:left;padding:0 2px;font-size:12.7px;line-height:18px;"><div>Иванова Алла<br>Леопольдовна</div></div>
<div class="c" style="left:311px;top:622px;width:54px;height:55px;justify-content:center;text-align:center;padding:0 2px;font-size:10.6px;line-height:13px;"><div>43253</div></div>
<div class="c" style="left:366px;top:622px;width:141px;height:55px;justify-content:center;text-align:left;padding:0 2px;font-size:11px;line-height:13px;"><div>Бухгалтер</div></div>
<div style="left:508px;top:622px;width:27px;height:27px;background:#ffff00"></div>
<div style="left:508px;top:650px;width:27px;height:27px;background:#ffff00"></div>
<div class="c" style="left:508px;top:650px;width:27px;height:27px;justify-content:center;text-align:center;padding:0 0px;font-size:12.7px;line-height:15px;"><div>В</div></div>
<div style="left:508px;top:649px;width:27px;height:1px;background-image:linear-gradient(90deg,#000 50%,transparent 50%);background-size:2px 1px"></div>
<div style="left:536px;top:622px;width:27px;height:27px;background:#ffff00"></div>
<div style="left:536px;top:650px;width:27px;height:27px;background:#ffff00"></div>
<div class="c" style="left:536px;top:650px;width:27px;height:27px;justify-content:center;text-align:center;padding:0 0px;font-size:12.7px;line-height:15px;"><div>В</div></div>
<div style="left:536px;top:649px;width:27px;height:1px;background-image:linear-gradient(90deg,#000 50%,transparent 50%);background-size:2px 1px"></div>
<div class="c" style="left:564px;top:622px;width:27px;height:27px;justify-content:center;text-align:center;padding:0 0px;font-size:12.7px;line-height:15px;"><div>8</div></div>
<div class="c" style="left:564px;top:650px;width:27px;height:27px;justify-content:center;text-align:center;padding:0 0px;font-size:12.7px;line-height:15px;"><div>Ф</div></div>
<svg style="left:564px;top:622px;" width="6" height="6" viewBox="0 0 6 6"><path d="M0 0h6L0 6z" fill="#008000"/></svg>
<div style="left:564px;top:649px;width:27px;height:1px;background-image:linear-gradient(90deg,#000 50%,transparent 50%);background-size:2px 1px"></div>
<div class="c" style="left:592px;top:622px;width:27px;height:27px;justify-content:center;text-align:center;padding:0 0px;font-size:12.7px;line-height:15px;"><div>8</div></div>
<div class="c" style="left:592px;top:650px;width:27px;height:27px;justify-content:center;text-align:center;padding:0 0px;font-size:12.7px;line-height:15px;"><div>Ф</div></div>
<svg style="left:592px;top:622px;" width="6" height="6" viewBox="0 0 6 6"><path d="M0 0h6L0 6z" fill="#008000"/></svg>
<div style="left:592px;top:649px;width:27px;height:1px;background-image:linear-gradient(90deg,#000 50%,transparent 50%);background-size:2px 1px"></div>
<div class="c" style="left:620px;top:622px;width:27px;height:27px;justify-content:center;text-align:center;padding:0 0px;font-size:12.7px;line-height:15px;"><div>8</div></div>
<div class="c" style="left:620px;top:650px;width:27px;height:27px;justify-content:center;text-align:center;padding:0 0px;font-size:12.7px;line-height:15px;"><div>Ф</div></div>
<svg style="left:620px;top:622px;" width="6" height="6" viewBox="0 0 6 6"><path d="M0 0h6L0 6z" fill="#008000"/></svg>
<div style="left:620px;top:649px;width:27px;height:1px;background-image:linear-gradient(90deg,#000 50%,transparent 50%);background-size:2px 1px"></div>
<div class="c" style="left:648px;top:622px;width:27px;height:27px;justify-content:center;text-align:center;padding:0 0px;font-size:12.7px;line-height:15px;"><div>8</div></div>
<div class="c" style="left:648px;top:650px;width:27px;height:27px;justify-content:center;text-align:center;padding:0 0px;font-size:12.7px;line-height:15px;"><div>Ф</div></div>
<svg style="left:648px;top:622px;" width="6" height="6" viewBox="0 0 6 6"><path d="M0 0h6L0 6z" fill="#008000"/></svg>
<div style="left:648px;top:649px;width:27px;height:1px;background-image:linear-gradient(90deg,#000 50%,transparent 50%);background-size:2px 1px"></div>
<div class="c" style="left:676px;top:622px;width:27px;height:27px;justify-content:center;text-align:center;padding:0 0px;font-size:12.7px;line-height:15px;"><div>8</div></div>
<div class="c" style="left:676px;top:650px;width:27px;height:27px;justify-content:center;text-align:center;padding:0 0px;font-size:12.7px;line-height:15px;"><div>Ф</div></div>
<svg style="left:676px;top:622px;" width="6" height="6" viewBox="0 0 6 6"><path d="M0 0h6L0 6z" fill="#008000"/></svg>
<div style="left:676px;top:649px;width:27px;height:1px;background-image:linear-gradient(90deg,#000 50%,transparent 50%);background-size:2px 1px"></div>
<div style="left:704px;top:622px;width:27px;height:27px;background:#ffff00"></div>
<div style="left:704px;top:650px;width:27px;height:27px;background:#ffff00"></div>
<div class="c" style="left:704px;top:650px;width:27px;height:27px;justify-content:center;text-align:center;padding:0 0px;font-size:12.7px;line-height:15px;"><div>В</div></div>
<div style="left:704px;top:649px;width:27px;height:1px;background-image:linear-gradient(90deg,#000 50%,transparent 50%);background-size:2px 1px"></div>
<div style="left:732px;top:622px;width:27px;height:27px;background:#ffff00"></div>
<div style="left:732px;top:650px;width:27px;height:27px;background:#ffff00"></div>
<div class="c" style="left:732px;top:650px;width:27px;height:27px;justify-content:center;text-align:center;padding:0 0px;font-size:12.7px;line-height:15px;"><div>В</div></div>
<div style="left:732px;top:649px;width:27px;height:1px;background-image:linear-gradient(90deg,#000 50%,transparent 50%);background-size:2px 1px"></div>
<div class="c" style="left:760px;top:622px;width:27px;height:27px;justify-content:center;text-align:center;padding:0 0px;font-size:12.7px;line-height:15px;"><div>8</div></div>
<div class="c" style="left:760px;top:650px;width:27px;height:27px;justify-content:center;text-align:center;padding:0 0px;font-size:12.7px;line-height:15px;"><div>Ф</div></div>
<svg style="left:760px;top:622px;" width="6" height="6" viewBox="0 0 6 6"><path d="M0 0h6L0 6z" fill="#008000"/></svg>
<div style="left:760px;top:649px;width:27px;height:1px;background-image:linear-gradient(90deg,#000 50%,transparent 50%);background-size:2px 1px"></div>
<div class="c" style="left:788px;top:622px;width:27px;height:27px;justify-content:center;text-align:center;padding:0 0px;font-size:12.7px;line-height:15px;"><div>8</div></div>
<div class="c" style="left:788px;top:650px;width:27px;height:27px;justify-content:center;text-align:center;padding:0 0px;font-size:12.7px;line-height:15px;"><div>Ф</div></div>
<svg style="left:788px;top:622px;" width="6" height="6" viewBox="0 0 6 6"><path d="M0 0h6L0 6z" fill="#008000"/></svg>
<div style="left:788px;top:649px;width:27px;height:1px;background-image:linear-gradient(90deg,#000 50%,transparent 50%);background-size:2px 1px"></div>
<div class="c" style="left:816px;top:622px;width:27px;height:27px;justify-content:center;text-align:center;padding:0 0px;font-size:12.7px;line-height:15px;"><div>8</div></div>
<div class="c" style="left:816px;top:650px;width:27px;height:27px;justify-content:center;text-align:center;padding:0 0px;font-size:12.7px;line-height:15px;"><div>Ф</div></div>
<svg style="left:816px;top:622px;" width="6" height="6" viewBox="0 0 6 6"><path d="M0 0h6L0 6z" fill="#008000"/></svg>
<div style="left:816px;top:649px;width:27px;height:1px;background-image:linear-gradient(90deg,#000 50%,transparent 50%);background-size:2px 1px"></div>
<div class="c" style="left:844px;top:622px;width:27px;height:27px;justify-content:center;text-align:center;padding:0 0px;font-size:12.7px;line-height:15px;"><div>8</div></div>
<div class="c" style="left:844px;top:650px;width:27px;height:27px;justify-content:center;text-align:center;padding:0 0px;font-size:12.7px;line-height:15px;"><div>Ф</div></div>
<svg style="left:844px;top:622px;" width="6" height="6" viewBox="0 0 6 6"><path d="M0 0h6L0 6z" fill="#008000"/></svg>
<div style="left:844px;top:649px;width:27px;height:1px;background-image:linear-gradient(90deg,#000 50%,transparent 50%);background-size:2px 1px"></div>
<div class="c" style="left:872px;top:622px;width:27px;height:27px;justify-content:center;text-align:center;padding:0 0px;font-size:12.7px;line-height:15px;"><div>8</div></div>
<div class="c" style="left:872px;top:650px;width:27px;height:27px;justify-content:center;text-align:center;padding:0 0px;font-size:12.7px;line-height:15px;"><div>Ф</div></div>
<svg style="left:872px;top:622px;" width="6" height="6" viewBox="0 0 6 6"><path d="M0 0h6L0 6z" fill="#008000"/></svg>
<div style="left:872px;top:649px;width:27px;height:1px;background-image:linear-gradient(90deg,#000 50%,transparent 50%);background-size:2px 1px"></div>
<div style="left:900px;top:622px;width:27px;height:27px;background:#ffff00"></div>
<div style="left:900px;top:650px;width:27px;height:27px;background:#ffff00"></div>
<div class="c" style="left:900px;top:650px;width:27px;height:27px;justify-content:center;text-align:center;padding:0 0px;font-size:12.7px;line-height:15px;"><div>В</div></div>
<div style="left:900px;top:649px;width:27px;height:1px;background-image:linear-gradient(90deg,#000 50%,transparent 50%);background-size:2px 1px"></div>
<div style="left:1015px;top:622px;width:27px;height:27px;background:#ffff00"></div>
<div style="left:1015px;top:650px;width:27px;height:27px;background:#ffff00"></div>
<div class="c" style="left:1015px;top:650px;width:27px;height:27px;justify-content:center;text-align:center;padding:0 0px;font-size:12.7px;line-height:15px;"><div>В</div></div>
<div style="left:1015px;top:649px;width:27px;height:1px;background-image:linear-gradient(90deg,#000 50%,transparent 50%);background-size:2px 1px"></div>
<div class="c" style="left:1043px;top:622px;width:27px;height:27px;justify-content:center;text-align:center;padding:0 0px;font-size:12.7px;line-height:15px;"><div>8</div></div>
<div class="c" style="left:1043px;top:650px;width:27px;height:27px;justify-content:center;text-align:center;padding:0 0px;font-size:12.7px;line-height:15px;"><div>Ф</div></div>
<svg style="left:1043px;top:622px;" width="6" height="6" viewBox="0 0 6 6"><path d="M0 0h6L0 6z" fill="#008000"/></svg>
<div style="left:1043px;top:649px;width:27px;height:1px;background-image:linear-gradient(90deg,#000 50%,transparent 50%);background-size:2px 1px"></div>
<div class="c" style="left:1071px;top:622px;width:27px;height:27px;justify-content:center;text-align:center;padding:0 0px;font-size:12.7px;line-height:15px;"><div>8</div></div>
<div class="c" style="left:1071px;top:650px;width:27px;height:27px;justify-content:center;text-align:center;padding:0 0px;font-size:12.7px;line-height:15px;"><div>Ф</div></div>
<svg style="left:1071px;top:622px;" width="6" height="6" viewBox="0 0 6 6"><path d="M0 0h6L0 6z" fill="#008000"/></svg>
<div style="left:1071px;top:649px;width:27px;height:1px;background-image:linear-gradient(90deg,#000 50%,transparent 50%);background-size:2px 1px"></div>
<div class="c" style="left:1099px;top:622px;width:27px;height:27px;justify-content:center;text-align:center;padding:0 0px;font-size:12.7px;line-height:15px;"><div>8</div></div>
<div class="c" style="left:1099px;top:650px;width:27px;height:27px;justify-content:center;text-align:center;padding:0 0px;font-size:12.7px;line-height:15px;"><div>Ф</div></div>
<svg style="left:1099px;top:622px;" width="6" height="6" viewBox="0 0 6 6"><path d="M0 0h6L0 6z" fill="#008000"/></svg>
<div style="left:1099px;top:649px;width:27px;height:1px;background-image:linear-gradient(90deg,#000 50%,transparent 50%);background-size:2px 1px"></div>
<div class="c" style="left:1127px;top:622px;width:27px;height:27px;justify-content:center;text-align:center;padding:0 0px;font-size:12.7px;line-height:15px;"><div>8</div></div>
<div class="c" style="left:1127px;top:650px;width:27px;height:27px;justify-content:center;text-align:center;padding:0 0px;font-size:12.7px;line-height:15px;"><div>Ф</div></div>
<svg style="left:1127px;top:622px;" width="6" height="6" viewBox="0 0 6 6"><path d="M0 0h6L0 6z" fill="#008000"/></svg>
<div style="left:1127px;top:649px;width:27px;height:1px;background-image:linear-gradient(90deg,#000 50%,transparent 50%);background-size:2px 1px"></div>
<div class="c" style="left:1155px;top:622px;width:27px;height:27px;justify-content:center;text-align:center;padding:0 0px;font-size:12.7px;line-height:15px;"><div>8</div></div>
<div class="c" style="left:1155px;top:650px;width:27px;height:27px;justify-content:center;text-align:center;padding:0 0px;font-size:12.7px;line-height:15px;"><div>Ф</div></div>
<svg style="left:1155px;top:622px;" width="6" height="6" viewBox="0 0 6 6"><path d="M0 0h6L0 6z" fill="#008000"/></svg>
<div style="left:1155px;top:649px;width:27px;height:1px;background-image:linear-gradient(90deg,#000 50%,transparent 50%);background-size:2px 1px"></div>
<div style="left:1183px;top:622px;width:27px;height:27px;background:#ffff00"></div>
<div style="left:1183px;top:650px;width:27px;height:27px;background:#ffff00"></div>
<div class="c" style="left:1183px;top:650px;width:27px;height:27px;justify-content:center;text-align:center;padding:0 0px;font-size:12.7px;line-height:15px;"><div>В</div></div>
<div style="left:1183px;top:649px;width:27px;height:1px;background-image:linear-gradient(90deg,#000 50%,transparent 50%);background-size:2px 1px"></div>
<div style="left:1211px;top:622px;width:27px;height:27px;background:#ffff00"></div>
<div style="left:1211px;top:650px;width:27px;height:27px;background:#ffff00"></div>
<div class="c" style="left:1211px;top:650px;width:27px;height:27px;justify-content:center;text-align:center;padding:0 0px;font-size:12.7px;line-height:15px;"><div>В</div></div>
<div style="left:1211px;top:649px;width:27px;height:1px;background-image:linear-gradient(90deg,#000 50%,transparent 50%);background-size:2px 1px"></div>
<div class="c" style="left:1239px;top:622px;width:27px;height:27px;justify-content:center;text-align:center;padding:0 0px;font-size:12.7px;line-height:15px;"><div>8</div></div>
<div class="c" style="left:1239px;top:650px;width:27px;height:27px;justify-content:center;text-align:center;padding:0 0px;font-size:12.7px;line-height:15px;"><div>Ф</div></div>
<svg style="left:1239px;top:622px;" width="6" height="6" viewBox="0 0 6 6"><path d="M0 0h6L0 6z" fill="#008000"/></svg>
<div style="left:1239px;top:649px;width:27px;height:1px;background-image:linear-gradient(90deg,#000 50%,transparent 50%);background-size:2px 1px"></div>
<div class="c" style="left:1267px;top:622px;width:27px;height:27px;justify-content:center;text-align:center;padding:0 0px;font-size:12.7px;line-height:15px;"><div>8</div></div>
<div class="c" style="left:1267px;top:650px;width:27px;height:27px;justify-content:center;text-align:center;padding:0 0px;font-size:12.7px;line-height:15px;"><div>Ф</div></div>
<svg style="left:1267px;top:622px;" width="6" height="6" viewBox="0 0 6 6"><path d="M0 0h6L0 6z" fill="#008000"/></svg>
<div style="left:1267px;top:649px;width:27px;height:1px;background-image:linear-gradient(90deg,#000 50%,transparent 50%);background-size:2px 1px"></div>
<div class="c" style="left:1295px;top:622px;width:27px;height:27px;justify-content:center;text-align:center;padding:0 0px;font-size:12.7px;line-height:15px;"><div>8</div></div>
<div class="c" style="left:1295px;top:650px;width:27px;height:27px;justify-content:center;text-align:center;padding:0 0px;font-size:12.7px;line-height:15px;"><div>Ф</div></div>
<svg style="left:1295px;top:622px;" width="6" height="6" viewBox="0 0 6 6"><path d="M0 0h6L0 6z" fill="#008000"/></svg>
<div style="left:1295px;top:649px;width:27px;height:1px;background-image:linear-gradient(90deg,#000 50%,transparent 50%);background-size:2px 1px"></div>
<div class="c" style="left:1323px;top:622px;width:27px;height:27px;justify-content:center;text-align:center;padding:0 0px;font-size:12.7px;line-height:15px;"><div>8</div></div>
<div class="c" style="left:1323px;top:650px;width:27px;height:27px;justify-content:center;text-align:center;padding:0 0px;font-size:12.7px;line-height:15px;"><div>Ф</div></div>
<svg style="left:1323px;top:622px;" width="6" height="6" viewBox="0 0 6 6"><path d="M0 0h6L0 6z" fill="#008000"/></svg>
<div style="left:1323px;top:649px;width:27px;height:1px;background-image:linear-gradient(90deg,#000 50%,transparent 50%);background-size:2px 1px"></div>
<div class="c" style="left:1351px;top:622px;width:27px;height:27px;justify-content:center;text-align:center;padding:0 0px;font-size:12.7px;line-height:15px;"><div>8</div></div>
<div class="c" style="left:1351px;top:650px;width:27px;height:27px;justify-content:center;text-align:center;padding:0 0px;font-size:12.7px;line-height:15px;"><div>Ф</div></div>
<svg style="left:1351px;top:622px;" width="6" height="6" viewBox="0 0 6 6"><path d="M0 0h6L0 6z" fill="#008000"/></svg>
<div style="left:1351px;top:649px;width:27px;height:1px;background-image:linear-gradient(90deg,#000 50%,transparent 50%);background-size:2px 1px"></div>
<div style="left:1379px;top:622px;width:27px;height:27px;background:#ffff00"></div>
<div style="left:1379px;top:650px;width:27px;height:27px;background:#ffff00"></div>
<div class="c" style="left:1379px;top:650px;width:27px;height:27px;justify-content:center;text-align:center;padding:0 0px;font-size:12.7px;line-height:15px;"><div>В</div></div>
<div style="left:1379px;top:649px;width:27px;height:1px;background-image:linear-gradient(90deg,#000 50%,transparent 50%);background-size:2px 1px"></div>
<div style="left:1407px;top:622px;width:27px;height:27px;background:#ffff00"></div>
<div style="left:1407px;top:650px;width:27px;height:27px;background:#ffff00"></div>
<div class="c" style="left:1407px;top:650px;width:27px;height:27px;justify-content:center;text-align:center;padding:0 0px;font-size:12.7px;line-height:15px;"><div>В</div></div>
<div style="left:1407px;top:649px;width:27px;height:1px;background-image:linear-gradient(90deg,#000 50%,transparent 50%);background-size:2px 1px"></div>
<div class="c" style="left:1435px;top:622px;width:27px;height:27px;justify-content:center;text-align:center;padding:0 0px;font-size:12.7px;line-height:15px;"><div>8</div></div>
<div class="c" style="left:1435px;top:650px;width:27px;height:27px;justify-content:center;text-align:center;padding:0 0px;font-size:12.7px;line-height:15px;"><div>Ф</div></div>
<svg style="left:1435px;top:622px;" width="6" height="6" viewBox="0 0 6 6"><path d="M0 0h6L0 6z" fill="#008000"/></svg>
<div style="left:1435px;top:649px;width:27px;height:1px;background-image:linear-gradient(90deg,#000 50%,transparent 50%);background-size:2px 1px"></div>
<div style="left:928px;top:622px;width:86px;height:55px;background:#99ccff"></div>
<div style="left:1463px;top:622px;width:91px;height:55px;background:#99ccff"></div>
<div class="c" style="left:928px;top:622px;width:86px;height:55px;justify-content:center;text-align:center;padding:0 0px;font-size:12.7px;line-height:15px;"><div>Ф 10 (80,00)</div></div>
<div class="c" style="left:1463px;top:622px;width:91px;height:55px;justify-content:center;text-align:center;padding:0 0px;font-size:12.7px;line-height:15px;"><div>Ф 21 (168,00)</div></div>
<svg style="left:311px;top:622px;" width="6" height="6" viewBox="0 0 6 6"><path d="M0 0h6L0 6z" fill="#008000"/></svg>
<div style="left:124px;top:677px;width:1431px;height:1px;background:#000"></div>
<div style="left:124px;top:621px;width:1px;height:57px;background:#000"></div>
<div style="left:145px;top:621px;width:1px;height:57px;background:#000"></div>
<div style="left:310px;top:621px;width:1px;height:57px;background:#000"></div>
<div style="left:365px;top:621px;width:1px;height:57px;background:#000"></div>
<div style="left:507px;top:621px;width:1px;height:57px;background:#000"></div>
<div style="left:535px;top:621px;width:1px;height:57px;background:#000"></div>
<div style="left:563px;top:621px;width:1px;height:57px;background:#000"></div>
<div style="left:591px;top:621px;width:1px;height:57px;background:#000"></div>
<div style="left:619px;top:621px;width:1px;height:57px;background:#000"></div>
<div style="left:647px;top:621px;width:1px;height:57px;background:#000"></div>
<div style="left:675px;top:621px;width:1px;height:57px;background:#000"></div>
<div style="left:703px;top:621px;width:1px;height:57px;background:#000"></div>
<div style="left:731px;top:621px;width:1px;height:57px;background:#000"></div>
<div style="left:759px;top:621px;width:1px;height:57px;background:#000"></div>
<div style="left:787px;top:621px;width:1px;height:57px;background:#000"></div>
<div style="left:815px;top:621px;width:1px;height:57px;background:#000"></div>
<div style="left:843px;top:621px;width:1px;height:57px;background:#000"></div>
<div style="left:871px;top:621px;width:1px;height:57px;background:#000"></div>
<div style="left:899px;top:621px;width:1px;height:57px;background:#000"></div>
<div style="left:927px;top:621px;width:1px;height:57px;background:#000"></div>
<div style="left:1014px;top:621px;width:1px;height:57px;background:#000"></div>
<div style="left:1042px;top:621px;width:1px;height:57px;background:#000"></div>
<div style="left:1070px;top:621px;width:1px;height:57px;background:#000"></div>
<div style="left:1098px;top:621px;width:1px;height:57px;background:#000"></div>
<div style="left:1126px;top:621px;width:1px;height:57px;background:#000"></div>
<div style="left:1154px;top:621px;width:1px;height:57px;background:#000"></div>
<div style="left:1182px;top:621px;width:1px;height:57px;background:#000"></div>
<div style="left:1210px;top:621px;width:1px;height:57px;background:#000"></div>
<div style="left:1238px;top:621px;width:1px;height:57px;background:#000"></div>
<div style="left:1266px;top:621px;width:1px;height:57px;background:#000"></div>
<div style="left:1294px;top:621px;width:1px;height:57px;background:#000"></div>
<div style="left:1322px;top:621px;width:1px;height:57px;background:#000"></div>
<div style="left:1350px;top:621px;width:1px;height:57px;background:#000"></div>
<div style="left:1378px;top:621px;width:1px;height:57px;background:#000"></div>
<div style="left:1406px;top:621px;width:1px;height:57px;background:#000"></div>
<div style="left:1434px;top:621px;width:1px;height:57px;background:#000"></div>
<div style="left:1462px;top:621px;width:1px;height:57px;background:#000"></div>
<div style="left:1554px;top:621px;width:1px;height:57px;background:#000"></div>
<div style="left:927px;top:621px;width:88px;height:2px;background:#000"></div>
<div style="left:1462px;top:621px;width:93px;height:2px;background:#000"></div>
<div class="c" style="left:146px;top:695px;width:164px;height:16px;justify-content:flex-end;text-align:left;padding:0 2px;font-size:12.7px;line-height:15px;"><div>Ответственный</div></div>
<div class="c" style="left:146px;top:712px;width:164px;height:16px;justify-content:flex-end;text-align:left;padding:0 2px;font-size:12.7px;line-height:15px;"><div>исполнитель</div></div>
<div class="c" style="left:146px;top:748px;width:164px;height:16px;justify-content:flex-end;text-align:left;padding:0 2px;font-size:12.7px;line-height:15px;"><div>Исполнитель</div></div>
<div style="left:310px;top:728px;width:254px;height:1px;background:#000"></div>
<div style="left:591px;top:728px;width:85px;height:1px;background:#000"></div>
<div style="left:703px;top:728px;width:141px;height:1px;background:#000"></div>
<div style="left:310px;top:764px;width:254px;height:1px;background:#000"></div>
<div style="left:591px;top:764px;width:85px;height:1px;background:#000"></div>
<div style="left:703px;top:764px;width:141px;height:1px;background:#000"></div>
<div style="left:311px;top:729px;width:252px;height:18px;background:#fff"></div>
<div style="left:592px;top:729px;width:83px;height:18px;background:#fff"></div>
<div style="left:704px;top:729px;width:139px;height:18px;background:#fff"></div>
<div class="c" style="left:311px;top:729px;width:252px;height:18px;justify-content:flex-start;text-align:center;padding:0 0px;font-size:9.0px;line-height:12px;"><div>(дожность)</div></div>
<div class="c" style="left:592px;top:729px;width:83px;height:18px;justify-content:flex-start;text-align:center;padding:0 0px;font-size:9.0px;line-height:12px;"><div>(подпись)</div></div>
<div class="c" style="left:704px;top:729px;width:139px;height:18px;justify-content:flex-start;text-align:center;padding:0 0px;font-size:9.0px;line-height:12px;"><div>(расшифровка подписи)</div></div>
<div style="left:311px;top:765px;width:252px;height:18px;background:#fff"></div>
<div style="left:592px;top:765px;width:83px;height:18px;background:#fff"></div>
<div style="left:704px;top:765px;width:139px;height:18px;background:#fff"></div>
<div class="c" style="left:311px;top:765px;width:252px;height:18px;justify-content:flex-start;text-align:center;padding:0 0px;font-size:9.0px;line-height:12px;"><div>(дожность)</div></div>
<div class="c" style="left:592px;top:765px;width:83px;height:18px;justify-content:flex-start;text-align:center;padding:0 0px;font-size:9.0px;line-height:12px;"><div>(подпись)</div></div>
<div class="c" style="left:704px;top:765px;width:139px;height:18px;justify-content:flex-start;text-align:center;padding:0 0px;font-size:9.0px;line-height:12px;"><div>(расшифровка подписи)</div></div>
<div style="left:146px;top:801px;width:193px;height:16px;background:#fff"></div>
<div class="c" style="left:148px;top:801px;width:200px;height:16px;justify-content:flex-end;font-size:12.7px;line-height:15px;white-space:pre"><div>"____" ______________20___г.</div></div>
<div style="left:1015px;top:712px;width:363px;height:16px;background:#fff"></div>
<div class="c" style="left:928px;top:712px;width:534px;height:16px;justify-content:flex-end;text-align:center;padding:0 0px;font-size:13.2px;line-height:16px;"><div><b>Отметка бухгалтерии о принятии настоящего табеля</b></div></div>
<div class="c" style="left:928px;top:748px;width:86px;height:16px;justify-content:flex-end;text-align:left;padding:0 2px;font-size:12.7px;line-height:15px;"><div>Исполнитель</div></div>
<div style="left:1042px;top:764px;width:197px;height:1px;background:#000"></div>
<div style="left:1266px;top:764px;width:113px;height:1px;background:#000"></div>
<div style="left:1406px;top:764px;width:149px;height:1px;background:#000"></div>
<div style="left:1043px;top:765px;width:195px;height:18px;background:#fff"></div>
<div style="left:1267px;top:765px;width:111px;height:18px;background:#fff"></div>
<div style="left:1407px;top:765px;width:147px;height:18px;background:#fff"></div>
<div class="c" style="left:1043px;top:765px;width:195px;height:18px;justify-content:flex-start;text-align:center;padding:0 0px;font-size:9.0px;line-height:12px;"><div>(дожность)</div></div>
<div class="c" style="left:1267px;top:765px;width:111px;height:18px;justify-content:flex-start;text-align:center;padding:0 0px;font-size:9.0px;line-height:12px;"><div>(подпись)</div></div>
<div class="c" style="left:1407px;top:765px;width:147px;height:18px;justify-content:flex-start;text-align:center;padding:0 0px;font-size:9.0px;line-height:12px;"><div>(расшифровка подписи)</div></div>
<div style="left:928px;top:801px;width:198px;height:16px;background:#fff"></div>
<div class="c" style="left:930px;top:801px;width:200px;height:16px;justify-content:flex-end;font-size:12.7px;line-height:15px;white-space:pre"><div>"____" ______________20___г.</div></div>
<div style="left:899px;top:711px;width:656px;height:1px;background-image:linear-gradient(90deg,#000 0,#000 9px,transparent 9px,transparent 11px,#000 11px,#000 13px,transparent 13px);background-size:15px 1px"></div>
<div style="left:899px;top:711px;width:1px;height:117px;background-image:linear-gradient(180deg,#000 0,#000 9px,transparent 9px,transparent 11px,#000 11px,#000 13px,transparent 13px);background-size:1px 15px"></div>
<div style="left:1554px;top:711px;width:1px;height:117px;background-image:linear-gradient(180deg,#000 0,#000 9px,transparent 9px,transparent 11px,#000 11px,#000 13px,transparent 13px);background-size:1px 15px"></div>
<div style="left:147px;top:566px;width:20px;height:20px;background:#ebebf0;border:1px solid #f2c45e;box-sizing:border-box"></div>
<svg style="left:150px;top:569px;" width="15" height="15" viewBox="0 0 15 15"><path d="M7.5 1 L14 7.5 L7.5 14 L1 7.5Z" fill="#fbfbd0" stroke="#000" stroke-width="1.1"/><path d="M4.5 6h1M4.5 9h1M9.5 6h1M9.5 9h1M6 4h1M8 11h1" stroke="#ffee00" stroke-width="1"/><rect x="6.6" y="3.5" width="1.8" height="5.5" fill="#000"/><rect x="6.6" y="10" width="1.8" height="1.2" fill="#000"/></svg>
<div style="left:99px;top:169px;width:1475px;height:18px;background:#dfe3e8"></div>
<div style="left:99px;top:186px;width:1475px;height:1px;background:#9ea5ae"></div>
<div style="left:99px;top:169px;width:26px;height:659px;background:#dfe3e8"></div>
<div style="left:124px;top:169px;width:1px;height:659px;background:#9ea5ae"></div>
<svg style="left:110px;top:173px;" width="11" height="11" viewBox="0 0 11 11"><path d="M10 0 L10 10 L0 10Z" fill="#c2c7ce"/></svg>
<div style="left:145px;top:169px;width:1px;height:17px;background:#b6bcc6"></div>
<div style="left:124px;top:169px;width:22px;height:18px;background:linear-gradient(#fbe6a6,#f6cf6a);border:1px solid #f0a33a;box-sizing:border-box"></div>
<div class="t" style="left:125px;top:169px;width:20px;height:17px;line-height:17px;text-align:center;font-size:13px;color:#2c2c2c">1</div>
<div style="left:310px;top:169px;width:1px;height:17px;background:#b6bcc6"></div>
<div class="t" style="left:146px;top:169px;width:164px;height:17px;line-height:17px;text-align:center;font-size:13px;color:#2c2c2c">2</div>
<div style="left:339px;top:169px;width:1px;height:17px;background:#b6bcc6"></div>
<div class="t" style="left:311px;top:169px;width:28px;height:17px;line-height:17px;text-align:center;font-size:13px;color:#2c2c2c">3</div>
<div style="left:365px;top:169px;width:1px;height:17px;background:#b6bcc6"></div>
<div class="t" style="left:340px;top:169px;width:25px;height:17px;line-height:17px;text-align:center;font-size:13px;color:#2c2c2c">4</div>
<div style="left:507px;top:169px;width:1px;height:17px;background:#b6bcc6"></div>
<div class="t" style="left:366px;top:169px;width:141px;height:17px;line-height:17px;text-align:center;font-size:13px;color:#2c2c2c">5</div>
<div style="left:535px;top:169px;width:1px;height:17px;background:#b6bcc6"></div>
<div class="t" style="left:508px;top:169px;width:27px;height:17px;line-height:17px;text-align:center;font-size:13px;color:#2c2c2c">6</div>
<div style="left:563px;top:169px;width:1px;height:17px;background:#b6bcc6"></div>
<div class="t" style="left:536px;top:169px;width:27px;height:17px;line-height:17px;text-align:center;font-size:13px;color:#2c2c2c">7</div>
<div style="left:591px;top:169px;width:1px;height:17px;background:#b6bcc6"></div>
<div class="t" style="left:564px;top:169px;width:27px;height:17px;line-height:17px;text-align:center;font-size:13px;color:#2c2c2c">8</div>
<div style="left:619px;top:169px;width:1px;height:17px;background:#b6bcc6"></div>
<div class="t" style="left:592px;top:169px;width:27px;height:17px;line-height:17px;text-align:center;font-size:13px;color:#2c2c2c">9</div>
<div style="left:647px;top:169px;width:1px;height:17px;background:#b6bcc6"></div>
<div class="t" style="left:620px;top:169px;width:27px;height:17px;line-height:17px;text-align:center;font-size:13px;color:#2c2c2c">10</div>
<div style="left:675px;top:169px;width:1px;height:17px;background:#b6bcc6"></div>
<div class="t" style="left:648px;top:169px;width:27px;height:17px;line-height:17px;text-align:center;font-size:13px;color:#2c2c2c">11</div>
<div style="left:703px;top:169px;width:1px;height:17px;background:#b6bcc6"></div>
<div class="t" style="left:676px;top:169px;width:27px;height:17px;line-height:17px;text-align:center;font-size:13px;color:#2c2c2c">12</div>
<div style="left:731px;top:169px;width:1px;height:17px;background:#b6bcc6"></div>
<div class="t" style="left:704px;top:169px;width:27px;height:17px;line-height:17px;text-align:center;font-size:13px;color:#2c2c2c">13</div>
<div style="left:759px;top:169px;width:1px;height:17px;background:#b6bcc6"></div>
<div class="t" style="left:732px;top:169px;width:27px;height:17px;line-height:17px;text-align:center;font-size:13px;color:#2c2c2c">14</div>
<div style="left:787px;top:169px;width:1px;height:17px;background:#b6bcc6"></div>
<div class="t" style="left:760px;top:169px;width:27px;height:17px;line-height:17px;text-align:center;font-size:13px;color:#2c2c2c">15</div>
<div style="left:815px;top:169px;width:1px;height:17px;background:#b6bcc6"></div>
<div class="t" style="left:788px;top:169px;width:27px;height:17px;line-height:17px;text-align:center;font-size:13px;color:#2c2c2c">16</div>
<div style="left:843px;top:169px;width:1px;height:17px;background:#b6bcc6"></div>
<div class="t" style="left:816px;top:169px;width:27px;height:17px;line-height:17px;text-align:center;font-size:13px;color:#2c2c2c">17</div>
<div style="left:871px;top:169px;width:1px;height:17px;background:#b6bcc6"></div>
<div class="t" style="left:844px;top:169px;width:27px;height:17px;line-height:17px;text-align:center;font-size:13px;color:#2c2c2c">18</div>
<div style="left:899px;top:169px;width:1px;height:17px;background:#b6bcc6"></div>
<div class="t" style="left:872px;top:169px;width:27px;height:17px;line-height:17px;text-align:center;font-size:13px;color:#2c2c2c">19</div>
<div style="left:927px;top:169px;width:1px;height:17px;background:#b6bcc6"></div>
<div class="t" style="left:900px;top:169px;width:27px;height:17px;line-height:17px;text-align:center;font-size:13px;color:#2c2c2c">20</div>
<div style="left:1014px;top:169px;width:1px;height:17px;background:#b6bcc6"></div>
<div class="t" style="left:928px;top:169px;width:86px;height:17px;line-height:17px;text-align:center;font-size:13px;color:#2c2c2c">21</div>
<div style="left:1042px;top:169px;width:1px;height:17px;background:#b6bcc6"></div>
<div class="t" style="left:1015px;top:169px;width:27px;height:17px;line-height:17px;text-align:center;font-size:13px;color:#2c2c2c">22</div>
<div style="left:1070px;top:169px;width:1px;height:17px;background:#b6bcc6"></div>
<div class="t" style="left:1043px;top:169px;width:27px;height:17px;line-height:17px;text-align:center;font-size:13px;color:#2c2c2c">23</div>
<div style="left:1098px;top:169px;width:1px;height:17px;background:#b6bcc6"></div>
<div class="t" style="left:1071px;top:169px;width:27px;height:17px;line-height:17px;text-align:center;font-size:13px;color:#2c2c2c">24</div>
<div style="left:1126px;top:169px;width:1px;height:17px;background:#b6bcc6"></div>
<div class="t" style="left:1099px;top:169px;width:27px;height:17px;line-height:17px;text-align:center;font-size:13px;color:#2c2c2c">25</div>
<div style="left:1154px;top:169px;width:1px;height:17px;background:#b6bcc6"></div>
<div class="t" style="left:1127px;top:169px;width:27px;height:17px;line-height:17px;text-align:center;font-size:13px;color:#2c2c2c">26</div>
<div style="left:1182px;top:169px;width:1px;height:17px;background:#b6bcc6"></div>
<div class="t" style="left:1155px;top:169px;width:27px;height:17px;line-height:17px;text-align:center;font-size:13px;color:#2c2c2c">27</div>
<div style="left:1210px;top:169px;width:1px;height:17px;background:#b6bcc6"></div>
<div class="t" style="left:1183px;top:169px;width:27px;height:17px;line-height:17px;text-align:center;font-size:13px;color:#2c2c2c">28</div>
<div style="left:1238px;top:169px;width:1px;height:17px;background:#b6bcc6"></div>
<div class="t" style="left:1211px;top:169px;width:27px;height:17px;line-height:17px;text-align:center;font-size:13px;color:#2c2c2c">29</div>
<div style="left:1266px;top:169px;width:1px;height:17px;background:#b6bcc6"></div>
<div class="t" style="left:1239px;top:169px;width:27px;height:17px;line-height:17px;text-align:center;font-size:13px;color:#2c2c2c">30</div>
<div style="left:1294px;top:169px;width:1px;height:17px;background:#b6bcc6"></div>
<div class="t" style="left:1267px;top:169px;width:27px;height:17px;line-height:17px;text-align:center;font-size:13px;color:#2c2c2c">31</div>
<div style="left:1322px;top:169px;width:1px;height:17px;background:#b6bcc6"></div>
<div class="t" style="left:1295px;top:169px;width:27px;height:17px;line-height:17px;text-align:center;font-size:13px;color:#2c2c2c">32</div>
<div style="left:1350px;top:169px;width:1px;height:17px;background:#b6bcc6"></div>
<div class="t" style="left:1323px;top:169px;width:27px;height:17px;line-height:17px;text-align:center;font-size:13px;color:#2c2c2c">33</div>
<div style="left:1378px;top:169px;width:1px;height:17px;background:#b6bcc6"></div>
<div class="t" style="left:1351px;top:169px;width:27px;height:17px;line-height:17px;text-align:center;font-size:13px;color:#2c2c2c">34</div>
<div style="left:1406px;top:169px;width:1px;height:17px;background:#b6bcc6"></div>
<div class="t" style="left:1379px;top:169px;width:27px;height:17px;line-height:17px;text-align:center;font-size:13px;color:#2c2c2c">35</div>
<div style="left:1434px;top:169px;width:1px;height:17px;background:#b6bcc6"></div>
<div class="t" style="left:1407px;top:169px;width:27px;height:17px;line-height:17px;text-align:center;font-size:13px;color:#2c2c2c">36</div>
<div style="left:1462px;top:169px;width:1px;height:17px;background:#b6bcc6"></div>
<div class="t" style="left:1435px;top:169px;width:27px;height:17px;line-height:17px;text-align:center;font-size:13px;color:#2c2c2c">37</div>
<div style="left:1554px;top:169px;width:1px;height:17px;background:#b6bcc6"></div>
<div class="t" style="left:1463px;top:169px;width:91px;height:17px;line-height:17px;text-align:center;font-size:13px;color:#2c2c2c">38</div>
<div style="left:99px;top:211px;width:25px;height:1px;background:#b6bcc6"></div>
<div class="t" style="left:99px;top:187px;width:25px;height:24px;line-height:24px;text-align:center;font-size:13px;color:#2c2c2c;display:flex;align-items:flex-end;justify-content:center;line-height:15px">1</div>
<div style="left:99px;top:231px;width:25px;height:1px;background:#b6bcc6"></div>
<div class="t" style="left:99px;top:212px;width:25px;height:19px;line-height:19px;text-align:center;font-size:13px;color:#2c2c2c;display:flex;align-items:flex-end;justify-content:center;line-height:15px">2</div>
<div style="left:99px;top:252px;width:25px;height:1px;background:#b6bcc6"></div>
<div class="t" style="left:99px;top:232px;width:25px;height:20px;line-height:20px;text-align:center;font-size:13px;color:#2c2c2c;display:flex;align-items:flex-end;justify-content:center;line-height:15px">3</div>
<div style="left:99px;top:273px;width:25px;height:1px;background:#b6bcc6"></div>
<div class="t" style="left:99px;top:253px;width:25px;height:20px;line-height:20px;text-align:center;font-size:13px;color:#2c2c2c;display:flex;align-items:flex-end;justify-content:center;line-height:15px">4</div>
<div style="left:99px;top:295px;width:25px;height:1px;background:#b6bcc6"></div>
<div class="t" style="left:99px;top:274px;width:25px;height:21px;line-height:21px;text-align:center;font-size:13px;color:#2c2c2c;display:flex;align-items:flex-end;justify-content:center;line-height:15px">5</div>
<div style="left:99px;top:320px;width:25px;height:1px;background:#b6bcc6"></div>
<div class="t" style="left:99px;top:296px;width:25px;height:24px;line-height:24px;text-align:center;font-size:13px;color:#2c2c2c;display:flex;align-items:flex-end;justify-content:center;line-height:15px">6</div>
<div style="left:99px;top:344px;width:25px;height:1px;background:#b6bcc6"></div>
<div class="t" style="left:99px;top:321px;width:25px;height:23px;line-height:23px;text-align:center;font-size:13px;color:#2c2c2c;display:flex;align-items:flex-end;justify-content:center;line-height:15px">7</div>
<div style="left:99px;top:366px;width:25px;height:1px;background:#b6bcc6"></div>
<div class="t" style="left:99px;top:345px;width:25px;height:21px;line-height:21px;text-align:center;font-size:13px;color:#2c2c2c;display:flex;align-items:flex-end;justify-content:center;line-height:15px">8</div>
<div style="left:99px;top:393px;width:25px;height:1px;background:#b6bcc6"></div>
<div class="t" style="left:99px;top:367px;width:25px;height:26px;line-height:26px;text-align:center;font-size:13px;color:#2c2c2c;display:flex;align-items:flex-end;justify-content:center;line-height:15px">9</div>
<div style="left:99px;top:410px;width:25px;height:1px;background:#b6bcc6"></div>
<div class="t" style="left:99px;top:394px;width:25px;height:16px;line-height:16px;text-align:center;font-size:13px;color:#2c2c2c;display:flex;align-items:flex-end;justify-content:center;line-height:15px">10</div>
<div style="left:99px;top:427px;width:25px;height:1px;background:#b6bcc6"></div>
<div class="t" style="left:99px;top:411px;width:25px;height:16px;line-height:16px;text-align:center;font-size:13px;color:#2c2c2c;display:flex;align-items:flex-end;justify-content:center;line-height:15px">11</div>
<div style="left:99px;top:444px;width:25px;height:1px;background:#b6bcc6"></div>
<div class="t" style="left:99px;top:428px;width:25px;height:16px;line-height:16px;text-align:center;font-size:13px;color:#2c2c2c;display:flex;align-items:flex-end;justify-content:center;line-height:15px">12</div>
<div style="left:99px;top:547px;width:25px;height:1px;background:#b6bcc6"></div>
<div class="t" style="left:99px;top:445px;width:25px;height:102px;line-height:102px;text-align:center;font-size:13px;color:#2c2c2c;display:flex;align-items:flex-end;justify-content:center;line-height:15px">13</div>
<div style="left:99px;top:565px;width:25px;height:1px;background:#b6bcc6"></div>
<div class="t" style="left:99px;top:548px;width:25px;height:17px;line-height:17px;text-align:center;font-size:13px;color:#2c2c2c;display:flex;align-items:flex-end;justify-content:center;line-height:15px">14</div>
<div style="left:99px;top:565px;width:25px;height:29px;background:#f9d57b;border-top:1px solid #e2a748;border-bottom:1px solid #e2a748;box-sizing:border-box"></div>
<div style="left:99px;top:593px;width:25px;height:1px;background:#b6bcc6"></div>
<div class="t" style="left:99px;top:566px;width:25px;height:27px;line-height:27px;text-align:center;font-size:13px;color:#2c2c2c;display:flex;align-items:flex-end;justify-content:center;line-height:15px">15</div>
<div style="left:99px;top:593px;width:25px;height:29px;background:#f9d57b;border-top:1px solid #e2a748;border-bottom:1px solid #e2a748;box-sizing:border-box"></div>
<div style="left:99px;top:621px;width:25px;height:1px;background:#b6bcc6"></div>
<div class="t" style="left:99px;top:594px;width:25px;height:27px;line-height:27px;text-align:center;font-size:13px;color:#2c2c2c;display:flex;align-items:flex-end;justify-content:center;line-height:15px">16</div>
<div style="left:99px;top:649px;width:25px;height:1px;background:#b6bcc6"></div>
<div class="t" style="left:99px;top:622px;width:25px;height:27px;line-height:27px;text-align:center;font-size:13px;color:#2c2c2c;display:flex;align-items:flex-end;justify-content:center;line-height:15px">17</div>
<div style="left:99px;top:677px;width:25px;height:1px;background:#b6bcc6"></div>
<div class="t" style="left:99px;top:650px;width:25px;height:27px;line-height:27px;text-align:center;font-size:13px;color:#2c2c2c;display:flex;align-items:flex-end;justify-content:center;line-height:15px">18</div>
<div style="left:99px;top:694px;width:25px;height:1px;background:#b6bcc6"></div>
<div class="t" style="left:99px;top:678px;width:25px;height:16px;line-height:16px;text-align:center;font-size:13px;color:#2c2c2c;display:flex;align-items:flex-end;justify-content:center;line-height:15px">19</div>
<div style="left:99px;top:711px;width:25px;height:1px;background:#b6bcc6"></div>
<div class="t" style="left:99px;top:695px;width:25px;height:16px;line-height:16px;text-align:center;font-size:13px;color:#2c2c2c;display:flex;align-items:flex-end;justify-content:center;line-height:15px">20</div>
<div style="left:99px;top:728px;width:25px;height:1px;background:#b6bcc6"></div>
<div class="t" style="left:99px;top:712px;width:25px;height:16px;line-height:16px;text-align:center;font-size:13px;color:#2c2c2c;display:flex;align-items:flex-end;justify-content:center;line-height:15px">21</div>
<div style="left:99px;top:747px;width:25px;height:1px;background:#b6bcc6"></div>
<div class="t" style="left:99px;top:729px;width:25px;height:18px;line-height:18px;text-align:center;font-size:13px;color:#2c2c2c;display:flex;align-items:flex-end;justify-content:center;line-height:15px">22</div>
<div style="left:99px;top:764px;width:25px;height:1px;background:#b6bcc6"></div>
<div class="t" style="left:99px;top:748px;width:25px;height:16px;line-height:16px;text-align:center;font-size:13px;color:#2c2c2c;display:flex;align-items:flex-end;justify-content:center;line-height:15px">23</div>
<div style="left:99px;top:783px;width:25px;height:1px;background:#b6bcc6"></div>
<div class="t" style="left:99px;top:765px;width:25px;height:18px;line-height:18px;text-align:center;font-size:13px;color:#2c2c2c;display:flex;align-items:flex-end;justify-content:center;line-height:15px">24</div>
<div style="left:99px;top:800px;width:25px;height:1px;background:#b6bcc6"></div>
<div class="t" style="left:99px;top:784px;width:25px;height:16px;line-height:16px;text-align:center;font-size:13px;color:#2c2c2c;display:flex;align-items:flex-end;justify-content:center;line-height:15px">25</div>
<div style="left:99px;top:817px;width:25px;height:1px;background:#b6bcc6"></div>
<div class="t" style="left:99px;top:801px;width:25px;height:16px;line-height:16px;text-align:center;font-size:13px;color:#2c2c2c;display:flex;align-items:flex-end;justify-content:center;line-height:15px">26</div>
<div class="t" style="left:99px;top:818px;width:25px;height:17px;line-height:17px;text-align:center;font-size:13px;color:#2c2c2c;display:flex;align-items:flex-end;justify-content:center;line-height:15px">27</div>
<div style="left:124px;top:564px;width:22px;height:2px;background:#fff"></div>
<div style="left:125px;top:566px;width:20px;height:1px;background:#000"></div>
<div style="left:125px;top:566px;width:1px;height:55px;background:#000"></div>
<div style="left:144px;top:564px;width:3px;height:57px;background:#000"></div>
<div style="left:125px;top:620px;width:22px;height:1px;background:#000"></div>
<div style="left:125px;top:622px;width:22px;height:1px;background:#000"></div>
<div style="left:143px;top:619px;width:6px;height:6px;background:#000;border:1px solid #fff;box-sizing:border-box"></div>
<svg style="left:126px;top:567px;" width="6" height="6" viewBox="0 0 6 6"><path d="M0 0h6L0 6z" fill="#008000"/></svg>
<div style="left:125px;top:566px;width:6px;height:1px;background:#ff66ff"></div>
<div style="left:125px;top:566px;width:1px;height:6px;background:#ff66ff"></div>
<svg style="left:126px;top:623px;" width="6" height="6" viewBox="0 0 6 6"><path d="M0 0h6L0 6z" fill="#008000"/></svg>
<div style="left:125px;top:622px;width:6px;height:1px;background:#ff66ff"></div>
<div style="left:125px;top:622px;width:1px;height:6px;background:#ff66ff"></div>
<div style="left:1574px;top:169px;width:16px;height:659px;background:#dde1e6"></div>
<div style="left:1575px;top:170px;width:13px;height:8px;background:#fff;border:1px solid #8d949c;box-sizing:border-box"></div>
<div style="left:1578px;top:173px;width:7px;height:1px;background:#8d949c"></div>
<svg style="left:1577px;top:183px;" width="9" height="6" viewBox="0 0 9 6"><path d="M0 5h9L4.5 0z" fill="#555"/></svg>
<div style="left:1575px;top:196px;width:13px;height:311px;background:linear-gradient(90deg,#f6f7f9,#dde2e8);border:1px solid #9aa1aa;border-radius:2px;box-sizing:border-box"></div>
<div style="left:1578px;top:348px;width:7px;height:1px;background:#8b929b"></div>
<div style="left:1578px;top:350px;width:7px;height:1px;background:#8b929b"></div>
<div style="left:1578px;top:352px;width:7px;height:1px;background:#8b929b"></div>
<div style="left:1578px;top:354px;width:7px;height:1px;background:#8b929b"></div>
<svg style="left:1577px;top:816px;" width="9" height="6" viewBox="0 0 9 6"><path d="M0 0h9L4.5 5z" fill="#555"/></svg>
<div style="left:99px;top:828px;width:1491px;height:16px;background:#dee2e7;border-top:1px solid #9ea5ae;box-sizing:border-box"></div>
<svg style="left:104px;top:832px;" width="54" height="9" viewBox="0 0 54 9"><path d="M1 0.5v7" stroke="#555" stroke-width="1.2"/><path d="M7 0.5L2.5 4 7 7.5z" fill="#555"/><path d="M21 0.5L16.5 4 21 7.5z" fill="#555"/><path d="M31.5 0.5L36 4 31.5 7.5z" fill="#555"/><path d="M45 0.5L49.5 4 45 7.5z" fill="#555"/><path d="M50.5 0.5v7" stroke="#555" stroke-width="1.2"/></svg>
<div style="left:161px;top:828px;width:1px;height:16px;background:#b9bfc7"></div>
<svg style="left:160px;top:828px;" width="110" height="16" viewBox="0 0 110 16"><path d="M70 0.5 H101 L88 15.5 H58Z" fill="#e3e6ea" stroke="#9ea5ae"/><path d="M1.5 0 V15.5 H55.5 L64 0" fill="#fff" stroke="#9ea5ae"/></svg>
<div style="left:162px;top:828px;width:56px;height:1px;background:#fff"></div>
<div class="t" style="left:168px;top:828px;width:46px;height:16px;line-height:16px;text-align:center;font-size:12.3px;font-weight:bold;color:#3b3b3b">Лист 1</div>
<svg style="left:228px;top:830px;" width="22" height="13" viewBox="0 0 22 13"><rect x="6" y="3" width="13" height="9" rx="1" fill="#e8f0fb" stroke="#5a7fb8"/><path d="M6 1L8 4M3 4h4M5 7l2-2" stroke="#f3a30a" stroke-width="1.5"/><circle cx="6" cy="4" r="2" fill="#f7c33a"/></svg>
<div style="left:984px;top:829px;width:8px;height:14px;background:#fff;border:1px solid #8d949c;box-sizing:border-box"></div>
<div style="left:987px;top:832px;width:1px;height:8px;background:#8d949c"></div>
<svg style="left:996px;top:831px;" width="6" height="10" viewBox="0 0 6 10"><path d="M5 0v10L0 5z" fill="#444"/></svg>
<div style="left:1009px;top:829px;width:525px;height:14px;background:linear-gradient(#f6f7f9,#dde2e8);border:1px solid #9aa1aa;border-radius:2px;box-sizing:border-box"></div>
<div style="left:1266px;top:832px;width:1px;height:7px;background:#8b929b"></div>
<div style="left:1268px;top:832px;width:1px;height:7px;background:#8b929b"></div>
<div style="left:1270px;top:832px;width:1px;height:7px;background:#8b929b"></div>
<div style="left:1272px;top:832px;width:1px;height:7px;background:#8b929b"></div>
<svg style="left:1555px;top:831px;" width="6" height="10" viewBox="0 0 6 10"><path d="M0 0v10l5-5z" fill="#555"/></svg>
<div style="left:1566px;top:829px;width:8px;height:14px;background:#fff;border:1px solid #8d949c;box-sizing:border-box"></div>
<div style="left:1569px;top:832px;width:1px;height:8px;background:#8d949c"></div>
<div style="left:1574px;top:828px;width:16px;height:16px;background:#dde1e6"></div>
<div style="left:99px;top:844px;width:1491px;height:22px;background:linear-gradient(#f0f2f4,#d9dde2 60%,#cdd2d8);border-top:1px solid #b9bfc6;box-sizing:border-box"></div>
<div class="t" style="left:107px;top:845px;width:60px;height:20px;line-height:20px;text-align:left;font-size:11.7px;color:#3b3b3b">Готово</div>
<div style="left:153px;top:846px;width:1px;height:19px;background:#b3b9c1"></div>
<svg style="left:163px;top:848px;" width="16" height="14" viewBox="0 0 16 14"><rect x="1" y="2" width="14" height="11" fill="#fff" stroke="#4a74c9"/><path d="M1 5h14M5 5v8M10 5v8M1 8h14M1 11h14" stroke="#4a74c9" stroke-width="0.8"/><circle cx="4" cy="3.5" r="3" fill="#e0331e"/></svg>
<div style="left:188px;top:846px;width:1px;height:19px;background:#b3b9c1"></div>
<div style="left:1333px;top:846px;width:1px;height:19px;background:#b3b9c1"></div>
<div style="left:1338px;top:846px;width:19px;height:19px;background:linear-gradient(#fde8a8,#f9d46e);border:1px solid #e0b34e;border-radius:2px;box-sizing:border-box"></div>
<svg style="left:1341px;top:849px;" width="13" height="13" viewBox="0 0 13 13"><rect x="0.5" y="0.5" width="12" height="12" fill="#fff" stroke="#555"/><path d="M0.5 4.5h12M0.5 8.5h12M4.5 0.5v12M8.5 0.5v12" stroke="#555"/></svg>
<svg style="left:1359px;top:848px;" width="15" height="15" viewBox="0 0 15 15"><rect x="0.5" y="0.5" width="14" height="14" fill="#dfe2e6" stroke="#777"/><rect x="3.5" y="3" width="8" height="9" fill="#fff" stroke="#777"/><path d="M5 5.5h5M5 7.5h5M5 9.5h5" stroke="#999"/></svg>
<svg style="left:1378px;top:848px;" width="15" height="15" viewBox="0 0 15 15"><rect x="0.5" y="0.5" width="14" height="14" fill="#a9afb7" stroke="#777"/><rect x="2" y="2" width="4" height="8" fill="#fff"/><rect x="7" y="2" width="3" height="6" fill="#fff"/></svg>
<div class="t" style="left:1403px;top:845px;width:32px;height:20px;line-height:20px;text-align:left;font-size:11.3px;color:#3b3b3b">100%</div>
<svg style="left:1438px;top:846px;" width="19" height="19" viewBox="0 0 19 19"><circle cx="9.5" cy="9.5" r="8" fill="#f7f8fa" stroke="#7c848d"/><rect x="5" y="8.5" width="9" height="2" fill="#444"/></svg>
<div style="left:1456px;top:855px;width:100px;height:1px;background:#9aa1aa"></div>
<div style="left:1456px;top:856px;width:100px;height:1px;background:#fff"></div>
<svg style="left:1500px;top:847px;" width="11" height="15" viewBox="0 0 11 15"><path d="M0.5 0.5H10.5V10L5.5 14.5L0.5 10Z" fill="#fbfcfd" stroke="#7c848d"/></svg>
<svg style="left:1553px;top:846px;" width="19" height="19" viewBox="0 0 19 19"><circle cx="9.5" cy="9.5" r="8" fill="#f7f8fa" stroke="#7c848d"/><rect x="5" y="8.5" width="9" height="2" fill="#444"/><rect x="8.5" y="5" width="2" height="9" fill="#444"/></svg>
<svg style="left:1576px;top:852px;" width="12" height="12" viewBox="0 0 12 12"><g fill="#b8bdc4"><rect x="9" y="1" width="2" height="2"/><rect x="6" y="4" width="2" height="2"/><rect x="9" y="4" width="2" height="2"/><rect x="3" y="7" width="2" height="2"/><rect x="6" y="7" width="2" height="2"/><rect x="9" y="7" width="2" height="2"/></g></svg>
</body></html>
